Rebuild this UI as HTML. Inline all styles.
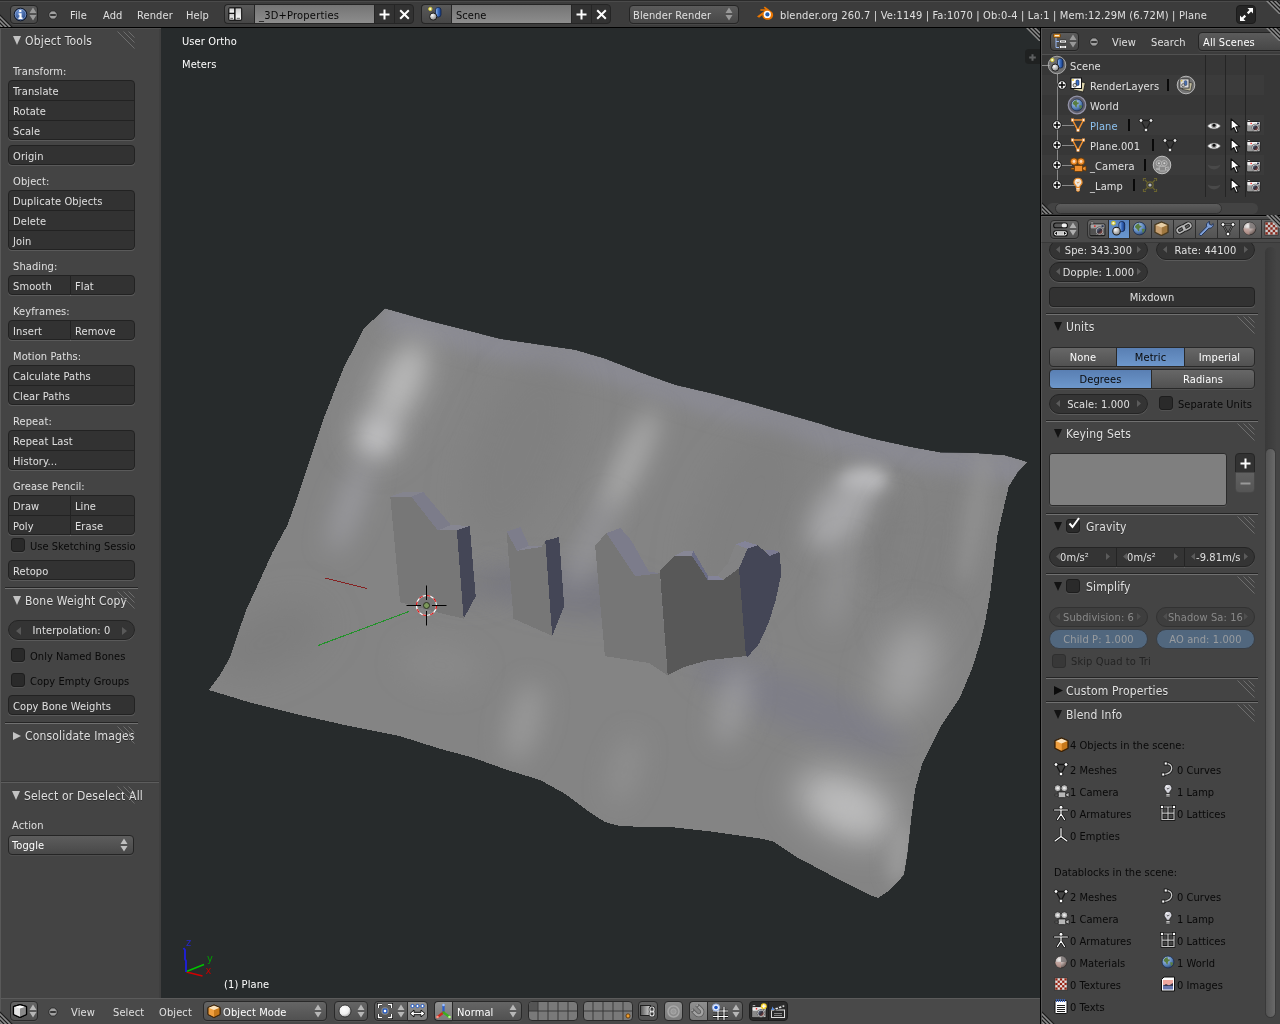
<!DOCTYPE html>
<html><head><meta charset="utf-8"><title>Blender</title>
<style>
*{box-sizing:border-box;margin:0;padding:0}
html,body{width:1280px;height:1024px;overflow:hidden;background:#272b2c}
body{font-family:"DejaVu Sans Condensed","DejaVu Sans","Liberation Sans",sans-serif;font-stretch:condensed;font-size:11px;letter-spacing:.11px;color:#e0e0e0;position:relative}
#root{position:absolute;left:0;top:0;width:1280px;height:1024px;overflow:hidden;will-change:transform;opacity:.999}
.a{position:absolute}
.t{position:absolute;white-space:nowrap;height:20px;line-height:20px}
.h{margin-top:-1px;font-size:12px;letter-spacing:.18px;text-shadow:0 1px 0 rgba(0,0,0,.35)}
.k{color:#0a0a0a;letter-spacing:.04px}
.btn{position:absolute;background:#333;border:1px solid #232323;box-shadow:0 1px 0 rgba(255,255,255,.12)}
.num{position:absolute;background:#353535;border:1px solid #252525;border-radius:10px;box-shadow:0 1px 0 rgba(255,255,255,.12);text-align:center;line-height:18px;height:20px}
.sep{position:absolute;height:1px;background:#727272;box-shadow:0 -1px 0 #262626}
.cb{position:absolute;width:14px;height:14px;border-radius:3px;background:#2b2b2b;border:1px solid #1e1e1e;box-shadow:0 1px 0 rgba(255,255,255,.08)}
.hb{position:absolute;border:1px solid #262626;border-radius:4px;background:linear-gradient(#5c5c5c,#484848);box-shadow:0 1px 0 rgba(255,255,255,.06)}
</style></head>
<body>
<div id="root">
<div class="a" style="left:0px;top:0px;width:1280px;height:28px;background:#3d3d3d;border-top:1px solid #2c2c2c;border-bottom:1px solid #000;box-shadow:inset 0 1px 0 #4c4c4c"></div>
<svg class="a" style="left:0;top:14px" width="14" height="13" viewBox="0 0 14 13"><g fill="none" stroke-width="1.500"><path d="M-1 0.300l14 14M-1 4.300l10 10M-1 8.300l6 6" stroke="#1c1c1c"/><path d="M-1 2l12 12M-1 6l8 8M-1 10l4 4" stroke="#8c8c8c"/></g></svg>
<div class="hb" style="left:10px;top:5px;width:28px;height:19px"></div>
<svg class="a" style="left:12.5px;top:6.5px" width="15" height="15" viewBox="0 0 15 15"><defs><radialGradient id="ig" cx=".4" cy=".3" r=".8"><stop offset="0" stop-color="#6f95d6"/><stop offset="1" stop-color="#1d3c78"/></radialGradient></defs><circle cx="7.5" cy="7.5" r="6.3" fill="url(#ig)" stroke="#0c1424" stroke-width="1"/><circle cx="7.5" cy="7.5" r="5.3" fill="none" stroke="#b9cdf0" stroke-opacity=".55" stroke-width=".8"/><path d="M6.2 3h2.2v2H6.2zM5.6 6.2h3v4.3h1v1.5H5.4v-1.5h1V7.7h-.8z" fill="#fff"/></svg>
<svg class="a" style="left:29px;top:7px" width="8" height="14" viewBox="0 0 8 14"><path d="M4 0.5l3.5 5.5h-7zM4 13.5l3.5-5.5h-7z" fill="#9a9a9a"/></svg>
<svg class="a" style="left:46.5px;top:8.5px" width="12" height="12" viewBox="0 0 12 12"><circle cx="6" cy="6" r="4.2" fill="#a2a2a2" stroke="#2a2a2a" stroke-width="1"/><path d="M3.200 6h5.600" stroke="#242424" stroke-width="1.700"/></svg>
<div class="t " style="left:70px;top:6px;">File</div>
<div class="t " style="left:103px;top:6px;">Add</div>
<div class="t " style="left:137px;top:6px;">Render</div>
<div class="t " style="left:186px;top:6px;">Help</div>
<div class="a" style="left:224px;top:4px;width:30px;height:20px;border:1px solid #262626;border-right:none;border-radius:4px 0 0 4px;background:linear-gradient(#5a5a5a,#474747)"></div>
<svg class="a" style="left:228px;top:7px" width="14.500" height="14" viewBox="0 0 14.500 14"><defs><linearGradient id="scg" x1="0" y1="0" x2="0" y2="1"><stop offset="0" stop-color="#c8c8c8"/><stop offset="1" stop-color="#fff"/></linearGradient></defs><rect x=".300" y=".300" width="13.900" height="13.400" rx="1.600" fill="#111"/><rect x="1.400" y="1.400" width="4.700" height="4.300" fill="url(#scg)"/><rect x="1.400" y="7" width="4.700" height="5.600" fill="url(#scg)"/><rect x="7.600" y="1.400" width="5.500" height="11.200" fill="url(#scg)"/><path d="M2.300 11.300h2.800M8.700 11.300h3.200" stroke="#555" stroke-width="1"/></svg>
<div class="a" style="left:254px;top:4px;width:121px;height:20px;border:1px solid #262626;background:linear-gradient(#757575,#8e8e8e)"></div>
<div class="t k" style="left:259px;top:6px;letter-spacing:.22px">_3D+Properties</div>
<div class="a" style="left:374px;top:4px;width:21px;height:20px;border:1px solid #262626;background:#333"></div>
<div class="a" style="left:394px;top:4px;width:20px;height:20px;border:1px solid #262626;border-radius:0 4px 4px 0;background:#333"></div>
<svg class="a" style="left:379px;top:9px" width="11" height="11" viewBox="0 0 11 11"><path d="M5.500 .500v10M.500 5.500h10" stroke="#fff" stroke-width="2"/></svg>
<svg class="a" style="left:399px;top:9px" width="11" height="11" viewBox="0 0 11 11"><path d="M1.200 1.200l8.600 8.600M9.800 1.200l-8.600 8.600" stroke="#fff" stroke-width="2"/></svg>
<div class="a" style="left:421px;top:4px;width:30px;height:20px;border:1px solid #262626;border-right:none;border-radius:4px 0 0 4px;background:linear-gradient(#5a5a5a,#474747)"></div>
<svg class="a" style="left:427px;top:6px" width="16" height="16" viewBox="0 0 16 16"><defs><radialGradient id="sba" cx=".35" cy=".3" r=".7"><stop offset="0" stop-color="#fff"/><stop offset="1" stop-color="#8a8a8a"/></radialGradient><linearGradient id="sca" x1="0" x2="1"><stop offset="0" stop-color="#9cc0f0"/><stop offset=".5" stop-color="#3a6cc0"/><stop offset="1" stop-color="#163a80"/></linearGradient></defs><rect x="8.5" y="1.5" width="5.5" height="9.5" rx="2.4" fill="url(#sca)" stroke="#12234a" stroke-width=".8"/><circle cx="3.3" cy="3" r="1.7" fill="#fffbd0" stroke="#c8c030" stroke-width="1"/><circle cx="6.2" cy="10.6" r="3.6" fill="url(#sba)" stroke="#1a1a1a" stroke-width="1"/></svg>
<div class="a" style="left:451px;top:4px;width:121px;height:20px;border:1px solid #262626;background:linear-gradient(#757575,#8e8e8e)"></div>
<div class="t k" style="left:456px;top:6px;">Scene</div>
<div class="a" style="left:571px;top:4px;width:21px;height:20px;border:1px solid #262626;background:#333"></div>
<div class="a" style="left:591px;top:4px;width:20px;height:20px;border:1px solid #262626;border-radius:0 4px 4px 0;background:#333"></div>
<svg class="a" style="left:576px;top:9px" width="11" height="11" viewBox="0 0 11 11"><path d="M5.500 .500v10M.500 5.500h10" stroke="#fff" stroke-width="2"/></svg>
<svg class="a" style="left:596px;top:9px" width="11" height="11" viewBox="0 0 11 11"><path d="M1.200 1.200l8.600 8.600M9.800 1.200l-8.600 8.600" stroke="#fff" stroke-width="2"/></svg>
<div class="hb" style="left:629px;top:5px;width:110px;height:19px"></div>
<div class="t " style="left:633px;top:6px;">Blender Render</div>
<svg class="a" style="left:725px;top:7px" width="8" height="14" viewBox="0 0 8 14"><path d="M4 0.5l3.5 5.5h-7zM4 13.5l3.5-5.5h-7z" fill="#9a9a9a"/></svg>
<svg class="a" style="left:756px;top:6px" width="18" height="16" viewBox="0 0 18 16"><path d="M1 10.5L8.5 4.8H4.4V3.2h5.2l-1.9-1.5 1.1-1.2 7.2 5.6c1.6 1.5 1.6 4.6-.4 6.3-2 1.800-5.600 1.900-7.800 0-1.100-.9-1.500-2.200-1.400-3.300l-3.300 2.600z" fill="#ea7600"/><circle cx="11.300" cy="8.400" r="3.600" fill="#fff"/><circle cx="11.400" cy="8.400" r="2.100" fill="#235fb0"/></svg>
<div class="t " style="left:780px;top:6px;letter-spacing:.17px">blender.org 260.7 | Ve:1149 | Fa:1070 | Ob:0-4 | La:1 | Mem:12.29M (6.72M) | Plane</div>
<div class="a" style="left:1236px;top:5px;width:20px;height:19px;border-radius:4px;background:#262626;border:1px solid #1c1c1c"></div>
<svg class="a" style="left:1239px;top:7px" width="15" height="15" viewBox="0 0 15 15"><g fill="#fff"><path d="M8.500 1h5.500v5.500l-1.900-1.900-2.600 2.600-1.600-1.600 2.600-2.600z"/><path d="M6.500 14H1V8.500l1.900 1.900 2.600-2.600 1.600 1.600-2.600 2.600z"/></g></svg>
<svg class="a" style="left:1266px;top:1px" width="14" height="13" viewBox="0 0 14 13"><g fill="none" stroke-width="1.500"><path d="M1.700 -1l14 14M5.700 -1l10 10M9.700 -1l6 6" stroke="#1c1c1c"/><path d="M0 -1l14 14M4 -1l10 10M8 -1l6 6" stroke="#8c8c8c"/></g></svg>
<div class="a" style="left:0px;top:28px;width:161px;height:970px;background:#454545;border-left:1px solid #5a5a5a;border-top:1px solid #525252"></div>
<div class="a" style="left:159px;top:29px;width:2px;height:969px;background:#404040"></div>
<svg class="a" style="left:13px;top:36px" width="8" height="9" viewBox="0 0 8 9"><path d="M0 0h8l-4.0 9z" fill="#c4c4c4"/></svg>
<div class="t h" style="left:25px;top:32px;">Object Tools</div>
<svg class="a" style="left:117px;top:31px" width="18" height="18" viewBox="0 0 18 18"><g stroke="#6e6e6e" stroke-width="1" fill="none"><path d="M0.5 0.5l17 17M6.5 0.5l11 11M11.5 0.5l6 6"/></g></svg>
<div class="t " style="left:13px;top:62px;">Transform:</div>
<div class="btn" style="left:8px;top:80px;width:127px;height:21px;border-radius:4px 4px 0 0"></div>
<div class="t " style="left:13px;top:82px;">Translate</div>
<div class="btn" style="left:8px;top:100px;width:127px;height:21px;border-radius:0"></div>
<div class="t " style="left:13px;top:102px;">Rotate</div>
<div class="btn" style="left:8px;top:120px;width:127px;height:20px;border-radius:0 0 4px 4px"></div>
<div class="t " style="left:13px;top:122px;">Scale</div>
<div class="btn" style="left:8px;top:145px;width:127px;height:20px;border-radius:4px"></div>
<div class="t " style="left:13px;top:147px;">Origin</div>
<div class="t " style="left:13px;top:172px;">Object:</div>
<div class="btn" style="left:8px;top:190px;width:127px;height:21px;border-radius:4px 4px 0 0"></div>
<div class="t " style="left:13px;top:192px;">Duplicate Objects</div>
<div class="btn" style="left:8px;top:210px;width:127px;height:21px;border-radius:0"></div>
<div class="t " style="left:13px;top:212px;">Delete</div>
<div class="btn" style="left:8px;top:230px;width:127px;height:20px;border-radius:0 0 4px 4px"></div>
<div class="t " style="left:13px;top:232px;">Join</div>
<div class="t " style="left:13px;top:257px;">Shading:</div>
<div class="btn" style="left:8px;top:275px;width:63px;height:20px;border-radius:4px 0 0 4px"></div>
<div class="btn" style="left:70px;top:275px;width:65px;height:20px;border-radius:0 4px 4px 0"></div>
<div class="t " style="left:13px;top:277px;">Smooth</div>
<div class="t " style="left:75px;top:277px;">Flat</div>
<div class="t " style="left:13px;top:302px;">Keyframes:</div>
<div class="btn" style="left:8px;top:320px;width:63px;height:20px;border-radius:4px 0 0 4px"></div>
<div class="btn" style="left:70px;top:320px;width:65px;height:20px;border-radius:0 4px 4px 0"></div>
<div class="t " style="left:13px;top:322px;">Insert</div>
<div class="t " style="left:75px;top:322px;">Remove</div>
<div class="t " style="left:13px;top:347px;">Motion Paths:</div>
<div class="btn" style="left:8px;top:365px;width:127px;height:21px;border-radius:4px 4px 0 0"></div>
<div class="t " style="left:13px;top:367px;">Calculate Paths</div>
<div class="btn" style="left:8px;top:385px;width:127px;height:20px;border-radius:0 0 4px 4px"></div>
<div class="t " style="left:13px;top:387px;">Clear Paths</div>
<div class="t " style="left:13px;top:412px;">Repeat:</div>
<div class="btn" style="left:8px;top:430px;width:127px;height:21px;border-radius:4px 4px 0 0"></div>
<div class="t " style="left:13px;top:432px;">Repeat Last</div>
<div class="btn" style="left:8px;top:450px;width:127px;height:20px;border-radius:0 0 4px 4px"></div>
<div class="t " style="left:13px;top:452px;">History...</div>
<div class="t " style="left:13px;top:477px;">Grease Pencil:</div>
<div class="btn" style="left:8px;top:495px;width:63px;height:21px;border-radius:4px 0 0 0"></div>
<div class="btn" style="left:70px;top:495px;width:65px;height:21px;border-radius:0 4px 0 0"></div>
<div class="t " style="left:13px;top:497px;">Draw</div>
<div class="t " style="left:75px;top:497px;">Line</div>
<div class="btn" style="left:8px;top:515px;width:63px;height:20px;border-radius:0 0 0 4px"></div>
<div class="btn" style="left:70px;top:515px;width:65px;height:20px;border-radius:0 0 4px 0"></div>
<div class="t " style="left:13px;top:517px;">Poly</div>
<div class="t " style="left:75px;top:517px;">Erase</div>
<div class="cb" style="left:11px;top:538px"></div>
<div class="t k" style="left:30px;top:537px;width:105px;overflow:hidden">Use Sketching Session</div>
<div class="btn" style="left:8px;top:560px;width:127px;height:20px;border-radius:4px"></div>
<div class="t " style="left:13px;top:562px;">Retopo</div>
<div class="sep" style="left:5px;top:588px;width:133px"></div>
<svg class="a" style="left:13px;top:596px" width="8" height="9" viewBox="0 0 8 9"><path d="M0 0h8l-4.0 9z" fill="#c4c4c4"/></svg>
<div class="t h" style="left:25px;top:592px;">Bone Weight Copy</div>
<svg class="a" style="left:117px;top:591px" width="18" height="18" viewBox="0 0 18 18"><g stroke="#6e6e6e" stroke-width="1" fill="none"><path d="M0.5 0.5l17 17M6.5 0.5l11 11M11.5 0.5l6 6"/></g></svg>
<div class="num" style="left:8px;top:620px;width:127px;line-height:20px">Interpolation: 0</div>
<svg class="a" style="left:16px;top:627px" width="5" height="8" viewBox="0 0 5 8"><path d="M5 0v8L0 4z" fill="#5a5a5a"/></svg>
<svg class="a" style="left:122px;top:627px" width="5" height="8" viewBox="0 0 5 8"><path d="M0 0v8l5-4z" fill="#5a5a5a"/></svg>
<div class="cb" style="left:11px;top:648px"></div>
<div class="t k" style="left:30px;top:647px;">Only Named Bones</div>
<div class="cb" style="left:11px;top:673px"></div>
<div class="t k" style="left:30px;top:672px;">Copy Empty Groups</div>
<div class="btn" style="left:8px;top:695px;width:127px;height:20px;border-radius:4px"></div>
<div class="t " style="left:13px;top:697px;">Copy Bone Weights</div>
<div class="sep" style="left:5px;top:723px;width:133px"></div>
<svg class="a" style="left:13px;top:731.5px" width="8" height="8" viewBox="0 0 8 8"><path d="M0 0v8l8 -4.0z" fill="#c4c4c4"/></svg>
<div class="t h" style="left:25px;top:727px;">Consolidate Images</div>
<svg class="a" style="left:117px;top:726px" width="18" height="18" viewBox="0 0 18 18"><g stroke="#6e6e6e" stroke-width="1" fill="none"><path d="M0.5 0.5l17 17M6.5 0.5l11 11M11.5 0.5l6 6"/></g></svg>
<div class="a" style="left:1px;top:782px;width:158px;height:1px;background:#5e5e5e;box-shadow:0 -1px 0 #3a3a3a"></div>
<svg class="a" style="left:12px;top:791px" width="8" height="9" viewBox="0 0 8 9"><path d="M0 0h8l-4.0 9z" fill="#c4c4c4"/></svg>
<div class="t h" style="left:24px;top:787px;">Select or Deselect All</div>
<svg class="a" style="left:117px;top:786px" width="18" height="18" viewBox="0 0 18 18"><g stroke="#6e6e6e" stroke-width="1" fill="none"><path d="M0.5 0.5l17 17M6.5 0.5l11 11M11.5 0.5l6 6"/></g></svg>
<div class="t " style="left:12px;top:816px;">Action</div>
<div class="hb" style="left:8px;top:835px;width:126px;height:20px;background:linear-gradient(#5e5e5e,#494949)"></div>
<div class="t " style="left:12px;top:836px;color:#fff">Toggle</div>
<svg class="a" style="left:120px;top:838px" width="8" height="14" viewBox="0 0 8 14"><path d="M4 0.5l3.5 5.5h-7zM4 13.5l3.5-5.5h-7z" fill="#c0c0c0"/></svg>
<svg class="a" style="left:161px;top:28px" width="879" height="970" viewBox="161 28 879 970" shape-rendering="crispEdges">
<defs>
<filter id="b8" filterUnits="userSpaceOnUse" x="161" y="28" width="879" height="970"><feGaussianBlur stdDeviation="8"/></filter>
<filter id="b12" filterUnits="userSpaceOnUse" x="161" y="28" width="879" height="970"><feGaussianBlur stdDeviation="12"/></filter>
<filter id="b18" filterUnits="userSpaceOnUse" x="161" y="28" width="879" height="970"><feGaussianBlur stdDeviation="18"/></filter>
<clipPath id="mc"><polygon points="385.0,308.5 425.0,320.0 465.0,330.0 500.0,339.0 537.5,344.5 575.0,350.0 605.0,358.8 640.0,372.5 675.0,385.0 712.5,393.8 750.0,403.8 787.5,414.5 820.0,423.8 835.0,428.8 872.5,438.8 910.0,447.0 940.0,452.5 972.5,453.0 1005.0,455.5 1027.0,462.0 1017.5,472.5 1008.8,486.2 1003.8,507.5 997.5,535.0 993.8,565.0 990.0,595.0 985.0,622.5 980.0,643.0 972.5,667.5 960.0,697.5 940.0,727.5 922.5,762.5 915.0,790.0 911.0,820.0 907.5,852.5 903.8,875.0 890.0,890.0 878.0,898.0 870.0,895.0 835.0,877.5 797.5,857.5 772.5,841.2 760.0,838.5 715.0,832.0 675.0,827.5 620.0,826.2 605.0,822.0 590.0,812.5 565.0,793.8 540.0,780.0 507.5,770.0 472.5,757.5 440.0,748.8 400.0,736.2 350.0,726.2 300.0,715.0 250.0,702.5 208.8,690.0 220.0,675.0 230.0,657.5 237.5,635.0 246.2,610.0 260.0,580.0 272.5,552.5 287.5,525.0 297.5,497.5 310.0,460.0 325.0,415.0 343.8,367.5 363.8,328.8"/></clipPath>
</defs>
<polygon points="385.0,308.5 425.0,320.0 465.0,330.0 500.0,339.0 537.5,344.5 575.0,350.0 605.0,358.8 640.0,372.5 675.0,385.0 712.5,393.8 750.0,403.8 787.5,414.5 820.0,423.8 835.0,428.8 872.5,438.8 910.0,447.0 940.0,452.5 972.5,453.0 1005.0,455.5 1027.0,462.0 1017.5,472.5 1008.8,486.2 1003.8,507.5 997.5,535.0 993.8,565.0 990.0,595.0 985.0,622.5 980.0,643.0 972.5,667.5 960.0,697.5 940.0,727.5 922.5,762.5 915.0,790.0 911.0,820.0 907.5,852.5 903.8,875.0 890.0,890.0 878.0,898.0 870.0,895.0 835.0,877.5 797.5,857.5 772.5,841.2 760.0,838.5 715.0,832.0 675.0,827.5 620.0,826.2 605.0,822.0 590.0,812.5 565.0,793.8 540.0,780.0 507.5,770.0 472.5,757.5 440.0,748.8 400.0,736.2 350.0,726.2 300.0,715.0 250.0,702.5 208.8,690.0 220.0,675.0 230.0,657.5 237.5,635.0 246.2,610.0 260.0,580.0 272.5,552.5 287.5,525.0 297.5,497.5 310.0,460.0 325.0,415.0 343.8,367.5 363.8,328.8" fill="#858585"/>
<g clip-path="url(#mc)">
<polyline points="385,314 500,345 605,365 712,400 835,435 940,459 1027,468" stroke="#8e8e98" stroke-width="30" fill="none" stroke-opacity=".75" filter="url(#b8)"/>
<ellipse cx="575" cy="592" rx="95" ry="24" transform="rotate(8 575 592)" fill="#74747f" fill-opacity="0.65" filter="url(#b12)"/>
<ellipse cx="470" cy="585" rx="40" ry="18" transform="rotate(0 470 585)" fill="#777780" fill-opacity="0.5" filter="url(#b12)"/>
<ellipse cx="800" cy="705" rx="115" ry="24" transform="rotate(22 800 705)" fill="#7c7c8a" fill-opacity="0.75" filter="url(#b12)"/>
<ellipse cx="700" cy="630" rx="60" ry="22" transform="rotate(20 700 630)" fill="#7a7a84" fill-opacity="0.5" filter="url(#b12)"/>
<ellipse cx="270" cy="640" rx="60" ry="30" transform="rotate(-25 270 640)" fill="#7a7a7a" fill-opacity="0.6" filter="url(#b18)"/>
<ellipse cx="520" cy="450" rx="45" ry="100" transform="rotate(22 520 450)" fill="#7d7d7d" fill-opacity="0.55" filter="url(#b18)"/>
<ellipse cx="745" cy="520" rx="45" ry="100" transform="rotate(22 745 520)" fill="#7e7e7e" fill-opacity="0.5" filter="url(#b18)"/>
<ellipse cx="930" cy="560" rx="30" ry="90" transform="rotate(15 930 560)" fill="#7e7e7e" fill-opacity="0.45" filter="url(#b18)"/>
<ellipse cx="398" cy="388" rx="30" ry="72" transform="rotate(25 398 388)" fill="#9a9a9a" fill-opacity="0.55" filter="url(#b18)"/>
<ellipse cx="401" cy="384" rx="18" ry="42" transform="rotate(25 401 384)" fill="#bcbcbc" fill-opacity="0.95" filter="url(#b12)"/>
<ellipse cx="377" cy="436" rx="20" ry="24" transform="rotate(25 377 436)" fill="#c4c4c6" fill-opacity="0.95" filter="url(#b12)"/>
<ellipse cx="350" cy="505" rx="12" ry="50" transform="rotate(20 350 505)" fill="#a0a0a6" fill-opacity="0.8" filter="url(#b12)"/>
<ellipse cx="630" cy="462" rx="13" ry="58" transform="rotate(26 630 462)" fill="#b0b0b0" fill-opacity="0.9" filter="url(#b12)"/>
<ellipse cx="590" cy="545" rx="12" ry="50" transform="rotate(24 590 545)" fill="#9c9ca2" fill-opacity="0.7" filter="url(#b12)"/>
<ellipse cx="864" cy="481" rx="24" ry="12" transform="rotate(-5 864 481)" fill="#cacacc" fill-opacity="0.95" filter="url(#b8)"/>
<ellipse cx="842" cy="512" rx="24" ry="46" transform="rotate(38 842 512)" fill="#aeaeb0" fill-opacity="0.85" filter="url(#b12)"/>
<ellipse cx="885" cy="540" rx="12" ry="50" transform="rotate(12 885 540)" fill="#7c7c7c" fill-opacity="0.6" filter="url(#b12)"/>
<ellipse cx="838" cy="585" rx="14" ry="45" transform="rotate(12 838 585)" fill="#9a9a9c" fill-opacity="0.55" filter="url(#b12)"/>
<ellipse cx="908" cy="668" rx="26" ry="50" transform="rotate(18 908 668)" fill="#acacae" fill-opacity="0.8" filter="url(#b18)"/>
<ellipse cx="846" cy="806" rx="52" ry="28" transform="rotate(25 846 806)" fill="#c6c6c8" fill-opacity="0.9" filter="url(#b18)"/>
<ellipse cx="850" cy="812" rx="26" ry="12" transform="rotate(25 850 812)" fill="#bdbdbd" fill-opacity="0.6" filter="url(#b12)"/>
<ellipse cx="975" cy="515" rx="12" ry="70" transform="rotate(10 975 515)" fill="#949494" fill-opacity="0.7" filter="url(#b8)"/>
<ellipse cx="524" cy="722" rx="16" ry="40" transform="rotate(15 524 722)" fill="#a0a0a0" fill-opacity="0.75" filter="url(#b12)"/>
<ellipse cx="625" cy="770" rx="14" ry="36" transform="rotate(15 625 770)" fill="#969696" fill-opacity="0.6" filter="url(#b12)"/>
<ellipse cx="732" cy="706" rx="16" ry="40" transform="rotate(15 732 706)" fill="#a0a0a2" fill-opacity="0.75" filter="url(#b12)"/>
<ellipse cx="900" cy="855" rx="12" ry="30" transform="rotate(10 900 855)" fill="#a4a4a4" fill-opacity="0.7" filter="url(#b8)"/>
<ellipse cx="440" cy="665" rx="40" ry="22" transform="rotate(10 440 665)" fill="#8c8c8c" fill-opacity="0.7" filter="url(#b12)"/>
</g>
<path d="M325 578L367 588.500" stroke="#862222" stroke-width="1" shape-rendering="crispEdges"/>
<path d="M318 645.500L409 611.500" stroke="#23932b" stroke-width="1.100" shape-rendering="crispEdges"/>
<polygon points="390.3,496.6 411.3,496.6 437.9,530.5 456.8,530.2 463.7,618.7 438.8,612.7 400.1,602.3" fill="#787878"/>
<polygon points="390.3,496.6 403.5,492.0 423.3,492.0 411.3,496.6" fill="#85858f"/>
<polygon points="411.3,496.6 423.3,492.0 450.8,525.0 437.9,530.5" fill="#7d7d8b"/>
<polygon points="437.9,530.5 450.8,525.0 469.7,525.9 456.8,530.2" fill="#878792"/>
<polygon points="456.8,530.2 469.7,525.9 475.7,596.3 463.7,618.7" fill="#454757"/>
<polygon points="506.6,531.5 517.0,550.8 541.9,546.5 545.3,540.8 552.2,635.9 513.5,618.7" fill="#787878"/>
<polygon points="506.6,531.5 520.4,527.1 529.0,545.6 517.0,550.8" fill="#7e7e8c"/>
<polygon points="517.0,550.8 529.0,545.6 541.9,545.6 541.9,546.8" fill="#868692"/>
<polygon points="545.3,540.8 559.1,537.0 564.2,605.8 552.2,635.9" fill="#454757"/>
<polygon points="717.5,575.7 727.8,563.3 735.6,544.4 747.6,548.7 739.0,568.4 723.5,579.6" fill="#8a8a8c" fill-opacity=".35"/>
<polygon points="595.1,545.2 606.6,533.2 635.0,576.2 659.9,573.3 667.7,675.3 648.8,663.0 604.9,656.1" fill="#777777"/>
<polygon points="606.6,533.2 620.4,528.0 631.6,540.9 648.8,571.5 659.9,573.3 635.0,576.2" fill="#7d7d8c"/>
<polygon points="659.9,571.0 673.7,556.4 691.7,555.5 708.1,580.5 723.5,579.6 739.0,568.4 745.9,656.1 707.2,660.4 683.1,667.3 667.7,675.3" fill="#595959"/>
<polygon points="673.7,556.4 683.1,551.3 693.4,550.9 691.7,555.5" fill="#888896"/>
<polygon points="691.7,555.5 693.4,550.9 708.1,576.2 708.1,580.5" fill="#6c6e86"/>
<polygon points="708.1,580.5 708.1,576.2 717.5,575.7 723.5,579.6" fill="#85859a"/>
<polygon points="739.0,568.4 747.6,548.7 757.9,545.2 769.1,555.5 779.4,552.1 781.4,573.6 775.9,599.4 769.1,621.7 758.8,644.1 747.6,657.0 745.9,656.1" fill="#454757"/>
<polygon points="735.6,544.4 745.0,541.3 757.9,545.2 747.6,548.7" fill="#85859a"/>
<polygon points="764.8,549.5 773.4,549.9 779.4,552.1 769.1,556.1" fill="#7c7c92"/>
<g shape-rendering="auto"><circle cx="426.5" cy="605.5" r="3" fill="#7d9a5c" stroke="#2a3320" stroke-width="1"/><circle cx="426.5" cy="605.5" r="10" fill="none" stroke="#fff" stroke-width="1.2"/><circle cx="426.5" cy="605.5" r="10" fill="none" stroke="#e01010" stroke-width="1.2" stroke-dasharray="3.9 3.9"/><path d="M406.5 605.5h14.500M432.0 605.5h14.500M426.5 585.5v14.500M426.5 611.0v14.500" stroke="#000" stroke-width="1"/></g>
<g shape-rendering="auto" fill="none" stroke-width="1.700"><path d="M186.500 972L202.500 976" stroke="#d40000"/><path d="M186.500 971.500L204 964.500" stroke="#00c400"/><path d="M186 972v-11l-1-2v-9l-1.500-2" stroke="#2020d8" stroke-width="1.900"/></g>
</svg>
<div class="t " style="left:182px;top:32px;color:#fff">User Ortho</div>
<div class="t " style="left:182px;top:55px;color:#fff">Meters</div>
<div class="t " style="left:224px;top:975px;color:#fff">(1) Plane</div>
<div class="t " style="left:205.5px;top:961px;color:#c00000">x</div>
<div class="t " style="left:207px;top:949px;color:#00a000">y</div>
<div class="t " style="left:186px;top:933px;color:#2828c8">z</div>
<svg class="a" style="left:1026px;top:28px" width="14" height="13" viewBox="0 0 14 13"><g fill="none" stroke-width="1.500"><path d="M1.700 -1l14 14M5.700 -1l10 10M9.700 -1l6 6" stroke="#1c1c1c"/><path d="M0 -1l14 14M4 -1l10 10M8 -1l6 6" stroke="#8c8c8c"/></g></svg>
<div class="a" style="left:1025px;top:49px;width:15px;height:15px;background:#202222;border-radius:4px 0 0 4px"></div>
<svg class="a" style="left:1028.500px;top:53.700px" width="7" height="7" viewBox="0 0 7 7"><path d="M3.500 0.200v6.600M0.200 3.500h6.600" stroke="#5f6162" stroke-width="2"/></svg>
<div class="a" style="left:0px;top:998px;width:1041px;height:26px;background:#4a4a4a;border-top:1px solid #5c5c5c;border-left:1px solid #5a5a5a"></div>
<svg class="a" style="left:0;top:1011px" width="14" height="13" viewBox="0 0 14 13"><g fill="none" stroke-width="1.500"><path d="M-1 0.300l14 14M-1 4.300l10 10M-1 8.300l6 6" stroke="#1c1c1c"/><path d="M-1 2l12 12M-1 6l8 8M-1 10l4 4" stroke="#8c8c8c"/></g></svg>
<div class="a" style="left:10px;top:1001px;width:28px;height:20px;border-radius:4px;border:1px solid #2a2a2a;background:linear-gradient(#666,#525252);box-shadow:0 1px 0 rgba(255,255,255,.06)"></div>
<svg class="a" style="left:12px;top:1003px" width="16" height="16" viewBox="0 0 16 16"><path d="M1.500 3.500L8 1.500l6.500 2v8L8 14.500l-6.500-3z" fill="#fff" stroke="#000" stroke-width="1.200" stroke-linejoin="round"/><path d="M8 5.500l6.500-2v8L8 14.500z" fill="#8a8a8a"/><path d="M1.500 3.500L8 5.500v9l-6.500-3z" fill="#e4e4e4"/><path d="M1.500 3.500L8 1.500l6.500 2v8L8 14.500l-6.500-3z" fill="none" stroke="#000" stroke-width="1.200" stroke-linejoin="round"/></svg>
<svg class="a" style="left:29px;top:1004px" width="8" height="14" viewBox="0 0 8 14"><path d="M4 0.5l3.5 5.5h-7zM4 13.5l3.5-5.5h-7z" fill="#b8b8b8"/></svg>
<svg class="a" style="left:46.5px;top:1005.5px" width="12" height="12" viewBox="0 0 12 12"><circle cx="6" cy="6" r="4.2" fill="#a2a2a2" stroke="#2a2a2a" stroke-width="1"/><path d="M3.200 6h5.600" stroke="#242424" stroke-width="1.700"/></svg>
<div class="t " style="left:71px;top:1003px;">View</div>
<div class="t " style="left:113px;top:1003px;">Select</div>
<div class="t " style="left:159px;top:1003px;">Object</div>
<div class="a" style="left:203px;top:1001px;width:124px;height:20px;border-radius:4px;border:1px solid #2a2a2a;background:linear-gradient(#666,#525252);box-shadow:0 1px 0 rgba(255,255,255,.06)"></div>
<svg class="a" style="left:207px;top:1004px" width="14" height="14" viewBox="0 0 14 14"><path d="M1 3.500L7 1l6 2.500v7L7 13.500 1 10.500z" fill="#f0a040" stroke="#3a2208" stroke-width="1" stroke-linejoin="round"/><path d="M7 6l6-2.500v7L7 13.500z" fill="#c87a1c"/><path d="M1 3.500L7 6v7.500L1 10.500z" fill="#f0a040"/><path d="M1 3.500L7 1l6 2.500L7 6z" fill="#fbe3bd"/><path d="M1 3.500L7 1l6 2.500v7L7 13.500 1 10.500z" fill="none" stroke="#3a2208" stroke-width="1" stroke-linejoin="round"/></svg>
<div class="t " style="left:223px;top:1003px;color:#fff">Object Mode</div>
<svg class="a" style="left:314px;top:1004px" width="8" height="14" viewBox="0 0 8 14"><path d="M4 0.5l3.5 5.5h-7zM4 13.5l3.5-5.5h-7z" fill="#b8b8b8"/></svg>
<div class="a" style="left:334px;top:1001px;width:34px;height:20px;border-radius:4px;border:1px solid #2a2a2a;background:linear-gradient(#666,#525252);box-shadow:0 1px 0 rgba(255,255,255,.06)"></div>
<svg class="a" style="left:338px;top:1004px" width="14" height="14" viewBox="0 0 14 14"><defs><radialGradient id="sh" cx=".4" cy=".35" r=".7"><stop offset="0" stop-color="#fff"/><stop offset=".6" stop-color="#f0f0f0"/><stop offset="1" stop-color="#9a9a9a"/></radialGradient></defs><circle cx="7" cy="7" r="6" fill="url(#sh)" stroke="#222" stroke-width=".8"/></svg>
<svg class="a" style="left:357px;top:1004px" width="8" height="14" viewBox="0 0 8 14"><path d="M4 0.5l3.5 5.5h-7zM4 13.5l3.5-5.5h-7z" fill="#b8b8b8"/></svg>
<div class="a" style="left:374px;top:1001px;width:34px;height:20px;border-radius:4px 0 0 4px;border:1px solid #2a2a2a;background:linear-gradient(#666,#525252);box-shadow:0 1px 0 rgba(255,255,255,.06)"></div>
<svg class="a" style="left:377px;top:1003px" width="16" height="16" viewBox="0 0 16 16"><g fill="none" stroke="#111" stroke-width="3"><path d="M1.500 5V1.500H5M11 1.500h3.500V5M14.500 11v3.500H11M5 14.500H1.500V11"/></g><g fill="none" stroke="#fff" stroke-width="1.400"><path d="M1.500 5V1.500H5M11 1.500h3.500V5M14.500 11v3.500H11M5 14.500H1.500V11"/></g><circle cx="8" cy="8" r="3.800" fill="#8c8c8c"/><rect x="6.200" y="6.200" width="3.600" height="3.600" rx=".800" fill="#fff" stroke="#1c57c8" stroke-width="1.200"/></svg>
<svg class="a" style="left:397px;top:1004px" width="8" height="14" viewBox="0 0 8 14"><path d="M4 0.5l3.5 5.5h-7zM4 13.5l3.5-5.5h-7z" fill="#b8b8b8"/></svg>
<div class="a" style="left:407px;top:1001px;width:21px;height:20px;border-radius:0 4px 4px 0;border:1px solid #2a2a2a;background:linear-gradient(#929292,#7c7c7c)"></div>
<svg class="a" style="left:409px;top:1003px" width="17" height="16" viewBox="0 0 17 16"><g fill="#fff" stroke="#1c57c8" stroke-width="1"><circle cx="3.500" cy="3" r="1.600"/><circle cx="8.500" cy="3" r="1.600"/><circle cx="13.500" cy="3" r="1.600"/></g><path d="M1 10.500l4-3.500v2.300h7V7l4 3.500-4 3.500v-2.300H5V14z" fill="#fff" stroke="#111" stroke-width="1"/></svg>
<div class="a" style="left:434px;top:1001px;width:19px;height:20px;border-radius:4px 0 0 4px;border:1px solid #2a2a2a;border-right:none;background:linear-gradient(#929292,#7c7c7c)"></div>
<svg class="a" style="left:435px;top:1003px" width="17" height="17" viewBox="0 0 17 17"><path d="M8.500 9.500V2" stroke="#2a5fd0" stroke-width="2.200" stroke-linecap="round"/><path d="M8.500 9.500L2.500 14" stroke="#d02a1c" stroke-width="2.200" stroke-linecap="round"/><path d="M8.500 9.500l6 4.500" stroke="#3cb020" stroke-width="2.200" stroke-linecap="round"/><circle cx="8.500" cy="2" r="1.300" fill="#9cc0ff"/><circle cx="2.500" cy="14" r="1.300" fill="#ff9a8a"/><circle cx="14.500" cy="14" r="1.300" fill="#baff8a"/></svg>
<div class="a" style="left:452px;top:1001px;width:70px;height:20px;border-radius:0 4px 4px 0;border:1px solid #2a2a2a;background:linear-gradient(#666,#525252);box-shadow:0 1px 0 rgba(255,255,255,.06)"></div>
<div class="t " style="left:457px;top:1003px;color:#fff">Normal</div>
<svg class="a" style="left:509px;top:1004px" width="8" height="14" viewBox="0 0 8 14"><path d="M4 0.5l3.5 5.5h-7zM4 13.5l3.5-5.5h-7z" fill="#b8b8b8"/></svg>
<div class="a" style="left:528px;top:1001px;width:50px;height:20px;border-radius:4px;border:1px solid #2a2a2a;background:#7a7a7a;overflow:hidden"></div>
<svg class="a" style="left:528px;top:1001px" width="50" height="20" viewBox="0 0 50 19" preserveAspectRatio="none"><path d="M1 5a4 4 0 0 1 4-4h5v8.500H1z" fill="#555"/><path d="M10 1v17M20 1v17M30 1v17M40 1v17M1 9.500h48" stroke="#3a3a3a" stroke-width="1"/></svg>
<div class="a" style="left:583px;top:1001px;width:50px;height:20px;border-radius:4px;border:1px solid #2a2a2a;background:#7a7a7a;overflow:hidden"></div>
<svg class="a" style="left:583px;top:1001px" width="50" height="20" viewBox="0 0 50 19" preserveAspectRatio="none"><path d="M10 1v17M20 1v17M30 1v17M40 1v17M1 9.500h48" stroke="#3a3a3a" stroke-width="1"/><circle cx="45" cy="14.200" r="2" fill="#f0a030" stroke="#5a3000" stroke-width=".8"/></svg>
<div class="a" style="left:638px;top:1001px;width:20px;height:20px;border-radius:4px;border:1px solid #2a2a2a;background:linear-gradient(#666,#525252);box-shadow:0 1px 0 rgba(255,255,255,.06)"></div>
<svg class="a" style="left:640px;top:1004px" width="16" height="15" viewBox="0 0 16 15"><defs><linearGradient id="lk" x1="0" x2="1"><stop offset="0" stop-color="#555"/><stop offset="1" stop-color="#ddd"/></linearGradient></defs><rect x=".500" y="1.500" width="10" height="10" fill="url(#lk)" stroke="#222" stroke-width="1"/><g fill="none" stroke="#222" stroke-width="2.600"><rect x="10" y="3" width="4" height="5" rx="2"/><rect x="10" y="7" width="4" height="5" rx="2"/></g><g fill="none" stroke="#e6e6e6" stroke-width="1.200"><rect x="10" y="3" width="4" height="5" rx="2"/><rect x="10" y="7" width="4" height="5" rx="2"/></g></svg>
<div class="a" style="left:664px;top:1001px;width:19px;height:20px;border-radius:4px;border:1px solid #2a2a2a;background:linear-gradient(#909090,#7c7c7c)"></div>
<svg class="a" style="left:666px;top:1004px" width="15" height="15" viewBox="0 0 15 15"><circle cx="7.500" cy="7.500" r="5.500" fill="#8c8c8c" stroke="#a8a8a8" stroke-width="1.500"/><circle cx="7.500" cy="7.500" r="2.600" fill="#9a9a9a" stroke="#aaa" stroke-width="1"/></svg>
<div class="a" style="left:689px;top:1001px;width:19px;height:20px;border-radius:4px 0 0 4px;border:1px solid #2a2a2a;border-right:none;background:linear-gradient(#909090,#7c7c7c)"></div>
<svg class="a" style="left:691px;top:1004px" width="15" height="15" viewBox="0 0 15 15"><g transform="rotate(-45 7.500 7.500)" fill="none"><path d="M4 1.500v6.500a3.500 3.500 0 0 0 7 0V1.500" stroke="#5a5a5a" stroke-width="4"/><path d="M4 1.500v6.500a3.500 3.500 0 0 0 7 0V1.500" stroke="#a4a4a4" stroke-width="2.400"/><path d="M2.500 3.500h3M9.500 3.500h3" stroke="#5a5a5a" stroke-width="1"/></g></svg>
<div class="a" style="left:707px;top:1001px;width:36px;height:20px;border-radius:0 4px 4px 0;border:1px solid #2a2a2a;background:linear-gradient(#666,#525252);box-shadow:0 1px 0 rgba(255,255,255,.06)"></div>
<svg class="a" style="left:711px;top:1003px" width="18" height="17" viewBox="0 0 18 17"><path d="M7 4v13M13 4v13M2 8h15M2 13.500h15" stroke="#111" stroke-width="2.400"/><path d="M7 4v13M13 4v13M2 8h15M2 13.500h15" stroke="#fff" stroke-width="1.200"/><circle cx="5" cy="4.500" r="3.600" fill="#e8eefc" stroke="#9ab0e0" stroke-width="1"/><circle cx="5" cy="4.500" r="1.800" fill="#1c57c8"/></svg>
<svg class="a" style="left:732px;top:1004px" width="8" height="14" viewBox="0 0 8 14"><path d="M4 0.5l3.5 5.5h-7zM4 13.5l3.5-5.5h-7z" fill="#b8b8b8"/></svg>
<div class="a" style="left:749px;top:1001px;width:20px;height:20px;border-radius:4px 0 0 4px;border:1px solid #1e1e1e;background:#2c2c2c"></div>
<div class="a" style="left:768px;top:1001px;width:20px;height:20px;border-radius:0 4px 4px 0;border:1px solid #1e1e1e;background:#2c2c2c"></div>
<svg class="a" style="left:751px;top:1003px;opacity:1" width="16" height="16" viewBox="0 0 16 16"><defs><linearGradient id="clr" x1="0" y1="0" x2="1" y2="1"><stop offset="0" stop-color="#6a7a9a"/><stop offset=".5" stop-color="#33303c"/><stop offset="1" stop-color="#a04a3c"/></linearGradient></defs><rect x="1.600" y="2" width="2.800" height="2" rx=".500" fill="#e4e4e4" stroke="#222" stroke-width=".500"/><rect x="1" y="3.700" width="14" height="11" rx="1" fill="#c4c4c4" stroke="#1c1c1c" stroke-width="1"/><rect x="1.600" y="4.300" width="12.800" height="3" fill="#ececec"/><rect x="1.700" y="8" width="5.200" height="6" fill="#8a8a8a"/><rect x="4.800" y="5.100" width="1.400" height="1.400" fill="#e82020"/><rect x="11.800" y="4.900" width="2" height="1.800" fill="#2a3450"/><circle cx="10" cy="10.300" r="3.900" fill="#d8d8d8" stroke="#3a3a3a" stroke-width=".600"/><circle cx="10" cy="10.300" r="2.700" fill="url(#clr)"/><circle cx="12.800" cy="3.200" r="3" fill="#f5d020"/><path d="M12.800 1.200v4M10.800 3.200h4" stroke="#fff" stroke-width="1.300"/></svg>
<svg class="a" style="left:770px;top:1003px" width="16" height="16" viewBox="0 0 16 16"><rect x="1.500" y="7" width="13" height="7.500" fill="#2a2a2a" stroke="#ddd" stroke-width="1"/><path d="M1.500 6.200L14 1.800l.8 2L2.300 8.300z" fill="#eee" stroke="#222" stroke-width=".6"/><path d="M4.500 5.200l1 2M8 4l1 2M11.500 2.800l1 2" stroke="#222" stroke-width="1.300"/><path d="M2.500 3.500l1.800 3.500h-3z" fill="#5a90e8"/><path d="M4 10.500h8M4 12.500h8" stroke="#888" stroke-width="1"/></svg>
<div class="a" style="left:1040px;top:28px;width:1px;height:996px;background:#000"></div>
<div class="a" style="left:1041px;top:28px;width:239px;height:27px;background:#3d3d3d;border-left:1px solid #565656;border-top:1px solid #4e4e4e;border-bottom:1px solid #525252"></div>
<div class="hb" style="left:1050px;top:32px;width:29px;height:19px"></div>
<svg class="a" style="left:1053px;top:33px" width="15" height="16" viewBox="0 0 15 16"><path d="M3 4v10.500h3M3 8.500h3" stroke="#9ab8f0" stroke-width="1" fill="none"/><rect x=".500" y="1" width="7" height="3.400" rx=".800" fill="#f0a030" stroke="#5a3000" stroke-width=".700"/><path d="M2 2.700h4" stroke="#fff" stroke-width="1"/><rect x="6.500" y="7" width="7" height="3" rx=".800" fill="#fff" stroke="#222" stroke-width=".700"/><rect x="6.500" y="12.500" width="7" height="3" rx=".800" fill="#fff" stroke="#222" stroke-width=".700"/><path d="M8 8.500h4M8 14h4" stroke="#999" stroke-width="1"/></svg>
<svg class="a" style="left:1069px;top:34px" width="8" height="14" viewBox="0 0 8 14"><path d="M4 0.5l3.5 5.5h-7zM4 13.5l3.5-5.5h-7z" fill="#9a9a9a"/></svg>
<svg class="a" style="left:1088.0px;top:36.0px" width="12" height="12" viewBox="0 0 12 12"><circle cx="6" cy="6" r="4.2" fill="#a2a2a2" stroke="#2a2a2a" stroke-width="1"/><path d="M3.200 6h5.600" stroke="#242424" stroke-width="1.700"/></svg>
<div class="t " style="left:1112px;top:33px;">View</div>
<div class="t " style="left:1151px;top:33px;">Search</div>
<div class="hb" style="left:1198px;top:32px;width:90px;height:19px"></div>
<div class="t " style="left:1203px;top:33px;color:#fff">All Scenes</div>
<svg class="a" style="left:1266px;top:28px" width="14" height="13" viewBox="0 0 14 13"><g fill="none" stroke-width="1.500"><path d="M1.700 -1l14 14M5.700 -1l10 10M9.700 -1l6 6" stroke="#1c1c1c"/><path d="M0 -1l14 14M4 -1l10 10M8 -1l6 6" stroke="#8c8c8c"/></g></svg>
<div class="a" style="left:1041px;top:55px;width:239px;height:160px;background:#383838;border-left:1px solid #565656"></div>
<div class="a" style="left:1042px;top:75px;width:1222px;height:20px;background:#3c3c3c;;width:222px"></div>
<div class="a" style="left:1042px;top:115px;width:1222px;height:20px;background:#3c3c3c;;width:222px"></div>
<div class="a" style="left:1042px;top:155px;width:1222px;height:20px;background:#3c3c3c;;width:222px"></div>
<div class="a" style="left:1205px;top:55px;width:1px;height:142px;background:#252525"></div>
<div class="a" style="left:1225px;top:55px;width:1px;height:142px;background:#252525"></div>
<div class="a" style="left:1245px;top:55px;width:1px;height:142px;background:#252525"></div>
<svg class="a" style="left:1042px;top:55px" width="60" height="150" viewBox="0 0 60 150"><g stroke="#8a8a8a" stroke-width="1" fill="none"><path d="M0 10.500h8M15.500 19v112M20 70.500h12M20 90.500h12M20 110.500h10M20 130.500h14"/></g></svg>
<svg class="a" style="left:1047px;top:55px" width="20" height="20" viewBox="0 0 20 20"><circle cx="10" cy="10" r="8.800" fill="#9a9a9a" fill-opacity=".55" stroke="#c8c8c8" stroke-opacity=".7" stroke-width="1"/></svg>
<svg class="a" style="left:1049px;top:57px" width="16" height="16" viewBox="0 0 16 16"><defs><radialGradient id="sbo" cx=".35" cy=".3" r=".7"><stop offset="0" stop-color="#fff"/><stop offset="1" stop-color="#8a8a8a"/></radialGradient><linearGradient id="sco" x1="0" x2="1"><stop offset="0" stop-color="#9cc0f0"/><stop offset=".5" stop-color="#3a6cc0"/><stop offset="1" stop-color="#163a80"/></linearGradient></defs><rect x="8.5" y="1.5" width="5.5" height="9.5" rx="2.4" fill="url(#sco)" stroke="#12234a" stroke-width=".8"/><circle cx="3.3" cy="3" r="1.7" fill="#fffbd0" stroke="#c8c030" stroke-width="1"/><circle cx="6.2" cy="10.6" r="3.6" fill="url(#sbo)" stroke="#1a1a1a" stroke-width="1"/></svg>
<div class="t " style="left:1070px;top:57px;">Scene</div>
<svg class="a" style="left:1057px;top:80px" width="10" height="10" viewBox="0 0 10 10"><circle cx="5" cy="5" r="4.200" fill="#f4f4f4" stroke="#101010" stroke-width="1"/><path d="M5 2v6M2 5h6" stroke="#000" stroke-width="1.500"/></svg>
<svg class="a" style="left:1070px;top:77px;opacity:1" width="16" height="16" viewBox="0 0 16 16"><rect x="4.500" y="4.500" width="10" height="9.500" fill="#d8d0a8" stroke="#222" stroke-width=".800" transform="rotate(12 9 9)"/><rect x="1" y="1" width="10.500" height="10.500" fill="#fff" stroke="#111" stroke-width="1"/><rect x="6" y="3" width="3" height="5.500" rx="1.200" fill="#3a70c8" stroke="#12234a" stroke-width=".600"/><circle cx="4.800" cy="8.200" r="1.800" fill="#ddd" stroke="#222" stroke-width=".700"/><circle cx="3" cy="3" r="1" fill="#f0d040"/></svg>
<div class="t " style="left:1090px;top:77px;">RenderLayers</div>
<div class="a" style="left:1167px;top:79px;width:2px;height:12px;background:#0a0a0a"></div>
<svg class="a" style="left:1176px;top:75px" width="20" height="20" viewBox="0 0 20 20"><circle cx="10" cy="10" r="8.800" fill="#9a9a9a" fill-opacity=".6" stroke="#d0d0d0" stroke-opacity=".8" stroke-width="1"/></svg>
<svg class="a" style="left:1179px;top:78px;opacity:0.75" width="14" height="14" viewBox="0 0 16 16"><rect x="4.500" y="4.500" width="10" height="9.500" fill="#d8d0a8" stroke="#222" stroke-width=".800" transform="rotate(12 9 9)"/><rect x="1" y="1" width="10.500" height="10.500" fill="#fff" stroke="#111" stroke-width="1"/><rect x="6" y="3" width="3" height="5.500" rx="1.200" fill="#3a70c8" stroke="#12234a" stroke-width=".600"/><circle cx="4.800" cy="8.200" r="1.800" fill="#ddd" stroke="#222" stroke-width=".700"/><circle cx="3" cy="3" r="1" fill="#f0d040"/></svg>
<svg class="a" style="left:1067px;top:95px" width="20" height="20" viewBox="0 0 20 20"><circle cx="10" cy="10" r="8.800" fill="#7a7a90" fill-opacity=".6" stroke="#a8a8c0" stroke-opacity=".8" stroke-width="1.200"/></svg>
<svg class="a" style="left:1070px;top:98px" width="14" height="14" viewBox="0 0 16 16"><defs><radialGradient id="wo" cx=".35" cy=".3" r=".8"><stop offset="0" stop-color="#c0d4ec"/><stop offset=".6" stop-color="#5a84bc"/><stop offset="1" stop-color="#263c64"/></radialGradient></defs><circle cx="8" cy="8" r="6.800" fill="url(#wo)" stroke="#1a2a4a" stroke-width=".800"/><path d="M3 6c1-2 3-3.500 4.500-3.300.8.500-.2 1.500.6 2.200.9.600 1.600 0 2.200.8-.3 1.200-1.600 1.100-2.300 2-.6 1 .2 2.300-.6 3.100-1 .300-1.300-1.300-1.900-2.100C4.800 7.800 3.500 7.500 3 6zM10.500 8.500c1-.5 2.500-.3 3.300.4-.1 1.500-1 3-2.300 3.800-.6-.8-.2-1.800-.6-2.600-.2-.6-.8-1-.4-1.600z" fill="#5a7e42"/></svg>
<div class="t " style="left:1090px;top:97px;">World</div>
<svg class="a" style="left:1052px;top:120px" width="10" height="10" viewBox="0 0 10 10"><circle cx="5" cy="5" r="4.200" fill="#f4f4f4" stroke="#101010" stroke-width="1"/><path d="M5 2v6M2 5h6" stroke="#000" stroke-width="1.500"/></svg>
<svg class="a" style="left:1070px;top:117px" width="16" height="16" viewBox="0 0 16 16"><path d="M2.500 3h11L8 13.500z" fill="none" stroke="#f09030" stroke-width="1.6" stroke-linejoin="round"/><g fill="#fff" stroke="#f09030" stroke-width=".600"><rect x="1.300" y="1.800" width="2.400" height="2.400"/><rect x="12.300" y="1.800" width="2.400" height="2.400"/><rect x="6.800" y="12" width="2.400" height="2.400"/></g></svg>
<svg class="a" style="left:1138px;top:117px" width="16" height="16" viewBox="0 0 16 16"><path d="M3 3.500h10L8 13z" fill="none" stroke="#202020" stroke-width="1.300"/><g fill="#e8e8e8" stroke="#111" stroke-width=".900"><circle cx="3" cy="3.500" r="1.900"/><circle cx="13" cy="3.500" r="1.900"/><circle cx="8" cy="13" r="1.900"/></g></svg>
<div class="t " style="left:1090px;top:117px;color:#8ec3f0">Plane</div>
<div class="a" style="left:1128px;top:119px;width:2px;height:12px;background:#0a0a0a"></div>
<svg class="a" style="left:1207px;top:121px" width="14" height="10" viewBox="0 0 14 10"><path d="M.500 5C3 1 11 1 13.500 5 11 9 3 9 .500 5z" fill="#f4f4f4" stroke="#555" stroke-width=".600"/><circle cx="7" cy="4.600" r="2.700" fill="#9a9a9a"/><circle cx="7" cy="4.300" r="1.500" fill="#111"/></svg>
<svg class="a" style="left:1230px;top:118px" width="11" height="16.500" viewBox="0 0 10 15"><path d="M1 .800v10l2.500-2.200 2 4.600 1.800-.800-2-4.500H8.800z" fill="#fff" stroke="#111" stroke-width="1" stroke-linejoin="round"/></svg>
<svg class="a" style="left:1246px;top:118px;opacity:1" width="15" height="15" viewBox="0 0 16 16"><defs><linearGradient id="clo125" x1="0" y1="0" x2="1" y2="1"><stop offset="0" stop-color="#6a7a9a"/><stop offset=".5" stop-color="#33303c"/><stop offset="1" stop-color="#a04a3c"/></linearGradient></defs><rect x="1.600" y="2" width="2.800" height="2" rx=".500" fill="#e4e4e4" stroke="#222" stroke-width=".500"/><rect x="1" y="3.700" width="14" height="11" rx="1" fill="#cfcfcf" stroke="#1c1c1c" stroke-width="1"/><rect x="1.600" y="4.300" width="12.800" height="3" fill="#f4f4f4"/><rect x="1.700" y="8" width="5.200" height="6" fill="#9a9a9a"/><rect x="4.800" y="5.100" width="1.400" height="1.400" fill="#e82020"/><rect x="11.800" y="4.900" width="2" height="1.800" fill="#2a3450"/><circle cx="10" cy="10.300" r="3.900" fill="#dcdcdc" stroke="#3a3a3a" stroke-width=".600"/><circle cx="10" cy="10.300" r="2.700" fill="url(#clo125)"/></svg>
<svg class="a" style="left:1052px;top:140px" width="10" height="10" viewBox="0 0 10 10"><circle cx="5" cy="5" r="4.200" fill="#f4f4f4" stroke="#101010" stroke-width="1"/><path d="M5 2v6M2 5h6" stroke="#000" stroke-width="1.500"/></svg>
<svg class="a" style="left:1070px;top:137px" width="16" height="16" viewBox="0 0 16 16"><path d="M2.500 3h11L8 13.500z" fill="none" stroke="#f09030" stroke-width="1.6" stroke-linejoin="round"/><g fill="#fff" stroke="#f09030" stroke-width=".600"><rect x="1.300" y="1.800" width="2.400" height="2.400"/><rect x="12.300" y="1.800" width="2.400" height="2.400"/><rect x="6.800" y="12" width="2.400" height="2.400"/></g></svg>
<svg class="a" style="left:1162px;top:137px" width="16" height="16" viewBox="0 0 16 16"><path d="M3 3.500h10L8 13z" fill="none" stroke="#202020" stroke-width="1.300"/><g fill="#e8e8e8" stroke="#111" stroke-width=".900"><circle cx="3" cy="3.500" r="1.900"/><circle cx="13" cy="3.500" r="1.900"/><circle cx="8" cy="13" r="1.900"/></g></svg>
<div class="t " style="left:1090px;top:137px;color:#e0e0e0">Plane.001</div>
<div class="a" style="left:1152px;top:139px;width:2px;height:12px;background:#0a0a0a"></div>
<svg class="a" style="left:1207px;top:141px" width="14" height="10" viewBox="0 0 14 10"><path d="M.500 5C3 1 11 1 13.500 5 11 9 3 9 .500 5z" fill="#f4f4f4" stroke="#555" stroke-width=".600"/><circle cx="7" cy="4.600" r="2.700" fill="#9a9a9a"/><circle cx="7" cy="4.300" r="1.500" fill="#111"/></svg>
<svg class="a" style="left:1230px;top:138px" width="11" height="16.500" viewBox="0 0 10 15"><path d="M1 .800v10l2.500-2.200 2 4.600 1.800-.800-2-4.500H8.800z" fill="#fff" stroke="#111" stroke-width="1" stroke-linejoin="round"/></svg>
<svg class="a" style="left:1246px;top:138px;opacity:1" width="15" height="15" viewBox="0 0 16 16"><defs><linearGradient id="clo145" x1="0" y1="0" x2="1" y2="1"><stop offset="0" stop-color="#6a7a9a"/><stop offset=".5" stop-color="#33303c"/><stop offset="1" stop-color="#a04a3c"/></linearGradient></defs><rect x="1.600" y="2" width="2.800" height="2" rx=".500" fill="#e4e4e4" stroke="#222" stroke-width=".500"/><rect x="1" y="3.700" width="14" height="11" rx="1" fill="#cfcfcf" stroke="#1c1c1c" stroke-width="1"/><rect x="1.600" y="4.300" width="12.800" height="3" fill="#f4f4f4"/><rect x="1.700" y="8" width="5.200" height="6" fill="#9a9a9a"/><rect x="4.800" y="5.100" width="1.400" height="1.400" fill="#e82020"/><rect x="11.800" y="4.900" width="2" height="1.800" fill="#2a3450"/><circle cx="10" cy="10.300" r="3.900" fill="#dcdcdc" stroke="#3a3a3a" stroke-width=".600"/><circle cx="10" cy="10.300" r="2.700" fill="url(#clo145)"/></svg>
<svg class="a" style="left:1052px;top:160px" width="10" height="10" viewBox="0 0 10 10"><circle cx="5" cy="5" r="4.200" fill="#f4f4f4" stroke="#101010" stroke-width="1"/><path d="M5 2v6M2 5h6" stroke="#000" stroke-width="1.500"/></svg>
<svg class="a" style="left:1069px;top:156px;opacity:1" width="18" height="18" viewBox="0 0 18 16"><g fill="#f09030" stroke="#6a3800" stroke-width=".800"><circle cx="5" cy="4.500" r="3.600"/><circle cx="12" cy="4.500" r="3.600"/><rect x="5.500" y="8.500" width="8" height="6" rx="1"/><path d="M13.500 10.500l3.500-1.500v5l-3.500-1.500zM5.500 11H2v1.500h3.500z"/></g><circle cx="5" cy="4.500" r="1.400" fill="#fff" fill-opacity=".7"/><circle cx="12" cy="4.500" r="1.400" fill="#fff" fill-opacity=".7"/></svg>
<svg class="a" style="left:1152px;top:155px" width="20" height="20" viewBox="0 0 20 20"><circle cx="10" cy="10" r="8.800" fill="#a0a0a0" fill-opacity=".75" stroke="#d8d8d8" stroke-opacity=".8" stroke-width="1"/></svg>
<svg class="a" style="left:1155px;top:159px;opacity:0.9" width="14" height="14" viewBox="0 0 18 16"><g fill="#8a8a8a" stroke="#d0d0d0" stroke-width=".800"><circle cx="5" cy="4.500" r="3.600"/><circle cx="12" cy="4.500" r="3.600"/><rect x="5.500" y="8.500" width="8" height="6" rx="1"/><path d="M13.500 10.500l3.500-1.500v5l-3.500-1.500zM5.500 11H2v1.500h3.500z"/></g><circle cx="5" cy="4.500" r="1.400" fill="#fff" fill-opacity=".7"/><circle cx="12" cy="4.500" r="1.400" fill="#fff" fill-opacity=".7"/></svg>
<div class="t " style="left:1090px;top:157px;color:#e0e0e0">_Camera</div>
<div class="a" style="left:1144px;top:159px;width:2px;height:12px;background:#0a0a0a"></div>
<svg class="a" style="left:1207px;top:161px" width="14" height="10" viewBox="0 0 14 10"><path d="M.500 3.500C2.500 10 11.500 10 13.500 3.500 10 5.500 4 5.500 .500 3.500z" fill="#4a4a4a"/></svg>
<svg class="a" style="left:1230px;top:158px" width="11" height="16.500" viewBox="0 0 10 15"><path d="M1 .800v10l2.500-2.200 2 4.600 1.800-.800-2-4.500H8.800z" fill="#fff" stroke="#111" stroke-width="1" stroke-linejoin="round"/></svg>
<svg class="a" style="left:1246px;top:158px;opacity:1" width="15" height="15" viewBox="0 0 16 16"><defs><linearGradient id="clo165" x1="0" y1="0" x2="1" y2="1"><stop offset="0" stop-color="#6a7a9a"/><stop offset=".5" stop-color="#33303c"/><stop offset="1" stop-color="#a04a3c"/></linearGradient></defs><rect x="1.600" y="2" width="2.800" height="2" rx=".500" fill="#e4e4e4" stroke="#222" stroke-width=".500"/><rect x="1" y="3.700" width="14" height="11" rx="1" fill="#cfcfcf" stroke="#1c1c1c" stroke-width="1"/><rect x="1.600" y="4.300" width="12.800" height="3" fill="#f4f4f4"/><rect x="1.700" y="8" width="5.200" height="6" fill="#9a9a9a"/><rect x="4.800" y="5.100" width="1.400" height="1.400" fill="#e82020"/><rect x="11.800" y="4.900" width="2" height="1.800" fill="#2a3450"/><circle cx="10" cy="10.300" r="3.900" fill="#dcdcdc" stroke="#3a3a3a" stroke-width=".600"/><circle cx="10" cy="10.300" r="2.700" fill="url(#clo165)"/></svg>
<svg class="a" style="left:1052px;top:180px" width="10" height="10" viewBox="0 0 10 10"><circle cx="5" cy="5" r="4.200" fill="#f4f4f4" stroke="#101010" stroke-width="1"/><path d="M5 2v6M2 5h6" stroke="#000" stroke-width="1.500"/></svg>
<svg class="a" style="left:1070px;top:177px" width="16" height="16" viewBox="0 0 16 16"><path d="M8 1.200a4 4 0 0 0-2.300 7.300c.5.500.6 1.100.6 1.900h3.400c0-.800.1-1.400.6-1.900A4 4 0 0 0 8 1.200z" fill="#efe6da" stroke="#e88a28" stroke-width="1.100"/><path d="M6.300 10.400h3.400v3.400l-.9.900H7.200l-.9-.9z" fill="#e88a28"/><path d="M6.300 11.600h3.400M6.300 13h3.400" stroke="#fff" stroke-width=".800"/><path d="M6.600 4.800l1.400 1.400 1.400-1.400" fill="none" stroke="#e88a28" stroke-width=".800"/><circle cx="6.600" cy="3.600" r="1" fill="#fff" fill-opacity=".8"/></svg>
<svg class="a" style="left:1142px;top:177px" width="16" height="16" viewBox="0 0 16 16"><g stroke="#6a6430" stroke-width="1.200" fill="none"><path d="M1.500 4V1.500H4M12 1.500h2.500V4M14.500 12v2.500H12M4 14.500H1.500V12M3 3l3 3M13 3l-3 3M13 13l-3-3M3 13l3-3"/><circle cx="8" cy="8" r="3.200"/></g><circle cx="8" cy="8" r="1.600" fill="#bdbdbd"/></svg>
<div class="t " style="left:1090px;top:177px;color:#e0e0e0">_Lamp</div>
<div class="a" style="left:1133px;top:179px;width:2px;height:12px;background:#0a0a0a"></div>
<svg class="a" style="left:1207px;top:181px" width="14" height="10" viewBox="0 0 14 10"><path d="M.500 3.500C2.500 10 11.500 10 13.500 3.500 10 5.500 4 5.500 .500 3.500z" fill="#4a4a4a"/></svg>
<svg class="a" style="left:1230px;top:178px" width="11" height="16.500" viewBox="0 0 10 15"><path d="M1 .800v10l2.500-2.200 2 4.600 1.800-.800-2-4.500H8.800z" fill="#fff" stroke="#111" stroke-width="1" stroke-linejoin="round"/></svg>
<svg class="a" style="left:1246px;top:178px;opacity:1" width="15" height="15" viewBox="0 0 16 16"><defs><linearGradient id="clo185" x1="0" y1="0" x2="1" y2="1"><stop offset="0" stop-color="#6a7a9a"/><stop offset=".5" stop-color="#33303c"/><stop offset="1" stop-color="#a04a3c"/></linearGradient></defs><rect x="1.600" y="2" width="2.800" height="2" rx=".500" fill="#e4e4e4" stroke="#222" stroke-width=".500"/><rect x="1" y="3.700" width="14" height="11" rx="1" fill="#cfcfcf" stroke="#1c1c1c" stroke-width="1"/><rect x="1.600" y="4.300" width="12.800" height="3" fill="#f4f4f4"/><rect x="1.700" y="8" width="5.200" height="6" fill="#9a9a9a"/><rect x="4.800" y="5.100" width="1.400" height="1.400" fill="#e82020"/><rect x="11.800" y="4.900" width="2" height="1.800" fill="#2a3450"/><circle cx="10" cy="10.300" r="3.900" fill="#dcdcdc" stroke="#3a3a3a" stroke-width=".600"/><circle cx="10" cy="10.300" r="2.700" fill="url(#clo185)"/></svg>
<div class="a" style="left:1047px;top:203px;width:211px;height:11px;background:#444;border-radius:6px"></div>
<div class="a" style="left:1055px;top:203px;width:167px;height:11px;background:linear-gradient(#5e5e5e,#4a4a4a);border-radius:6px;border:1px solid #333"></div>
<svg class="a" style="left:1042px;top:202px" width="12" height="12" viewBox="0 0 12 12"><g fill="none" stroke-width="1.500"><path d="M-1 0.300l14 14M-1 4.300l10 10M-1 8.300l6 6" stroke="#1c1c1c"/><path d="M-1 2l12 12M-1 6l8 8M-1 10l4 4" stroke="#8c8c8c"/></g></svg>
<div class="a" style="left:1041px;top:215px;width:239px;height:1px;background:#000"></div>
<div class="a" style="left:1041px;top:243px;width:239px;height:781px;background:#454545;border-left:1px solid #585858"></div>
<div class="num" style="left:1049px;top:240px;width:99px;line-height:20px;">Spe: 343.300</div>
<svg class="a" style="left:1056px;top:246px" width="4" height="7" viewBox="0 0 4 7"><path d="M4 0v7L0 3.500z" fill="#5c5c5c"/></svg>
<svg class="a" style="left:1137px;top:246px" width="4" height="7" viewBox="0 0 4 7"><path d="M0 0v7l4-3.500z" fill="#5c5c5c"/></svg>
<div class="num" style="left:1156px;top:240px;width:99px;line-height:20px;">Rate: 44100</div>
<svg class="a" style="left:1163px;top:246px" width="4" height="7" viewBox="0 0 4 7"><path d="M4 0v7L0 3.500z" fill="#5c5c5c"/></svg>
<svg class="a" style="left:1244px;top:246px" width="4" height="7" viewBox="0 0 4 7"><path d="M0 0v7l4-3.500z" fill="#5c5c5c"/></svg>
<div class="num" style="left:1049px;top:262px;width:99px;line-height:20px;">Dopple: 1.000</div>
<svg class="a" style="left:1056px;top:268px" width="4" height="7" viewBox="0 0 4 7"><path d="M4 0v7L0 3.500z" fill="#5c5c5c"/></svg>
<svg class="a" style="left:1137px;top:268px" width="4" height="7" viewBox="0 0 4 7"><path d="M0 0v7l4-3.500z" fill="#5c5c5c"/></svg>
<div class="btn" style="left:1049px;top:287px;width:206px;height:20px;border-radius:4px;text-align:center;line-height:20px">Mixdown</div>
<div class="sep" style="left:1046px;top:314px;width:212px"></div>
<svg class="a" style="left:1054px;top:321.5px" width="8" height="9" viewBox="0 0 8 9"><path d="M0 0h8l-4.0 9z" fill="#141414"/></svg>
<div class="t h" style="left:1066px;top:318px;">Units</div>
<svg class="a" style="left:1237px;top:316px" width="18" height="18" viewBox="0 0 18 18"><g stroke="#6e6e6e" stroke-width="1" fill="none"><path d="M0.5 0.5l17 17M6.5 0.5l11 11M11.5 0.5l6 6"/></g></svg>
<div class="a" style="left:1049px;top:347px;width:68px;height:20px;border:1px solid #2a2a2a;border-radius:4px 0 0 4px;background:linear-gradient(#686868,#525252);color:#fff;text-align:center;line-height:20px;box-shadow:0 1px 0 rgba(255,255,255,.07)">None</div>
<div class="a" style="left:1116px;top:347px;width:69px;height:20px;border:1px solid #2a2a2a;border-radius:0;background:linear-gradient(#5a80b4,#6e98cc);color:#0a0a0a;text-align:center;line-height:20px;box-shadow:0 1px 0 rgba(255,255,255,.07)">Metric</div>
<div class="a" style="left:1184px;top:347px;width:71px;height:20px;border:1px solid #2a2a2a;border-radius:0 4px 4px 0;background:linear-gradient(#686868,#525252);color:#fff;text-align:center;line-height:20px;box-shadow:0 1px 0 rgba(255,255,255,.07)">Imperial</div>
<div class="a" style="left:1049px;top:369px;width:103px;height:20px;border:1px solid #2a2a2a;border-radius:4px 0 0 4px;background:linear-gradient(#5a80b4,#6e98cc);color:#0a0a0a;text-align:center;line-height:20px;box-shadow:0 1px 0 rgba(255,255,255,.07)">Degrees</div>
<div class="a" style="left:1151px;top:369px;width:104px;height:20px;border:1px solid #2a2a2a;border-radius:0 4px 4px 0;background:linear-gradient(#686868,#525252);color:#fff;text-align:center;line-height:20px;box-shadow:0 1px 0 rgba(255,255,255,.07)">Radians</div>
<div class="num" style="left:1049px;top:394px;width:99px;line-height:20px;">Scale: 1.000</div>
<svg class="a" style="left:1056px;top:400px" width="4" height="7" viewBox="0 0 4 7"><path d="M4 0v7L0 3.500z" fill="#5c5c5c"/></svg>
<svg class="a" style="left:1137px;top:400px" width="4" height="7" viewBox="0 0 4 7"><path d="M0 0v7l4-3.500z" fill="#5c5c5c"/></svg>
<div class="cb" style="left:1159px;top:396px"></div>
<div class="t k" style="left:1178px;top:395px;">Separate Units</div>
<div class="sep" style="left:1046px;top:421px;width:212px"></div>
<svg class="a" style="left:1054px;top:428.5px" width="8" height="9" viewBox="0 0 8 9"><path d="M0 0h8l-4.0 9z" fill="#141414"/></svg>
<div class="t h" style="left:1066px;top:425px;">Keying Sets</div>
<svg class="a" style="left:1237px;top:423px" width="18" height="18" viewBox="0 0 18 18"><g stroke="#6e6e6e" stroke-width="1" fill="none"><path d="M0.5 0.5l17 17M6.5 0.5l11 11M11.5 0.5l6 6"/></g></svg>
<div class="a" style="left:1049px;top:453px;width:178px;height:53px;background:#808080;border:1px solid #2c2c2c;border-radius:3px;box-shadow:0 1px 0 rgba(255,255,255,.08)"></div>
<div class="a" style="left:1235px;top:453px;width:20px;height:20px;background:#333;border:1px solid #262626;border-radius:4px 4px 0 0"></div>
<svg class="a" style="left:1240px;top:458px" width="11" height="11" viewBox="0 0 11 11"><path d="M5.500 .500v10M.500 5.500h10" stroke="#fff" stroke-width="2"/></svg>
<div class="a" style="left:1235px;top:472px;width:20px;height:21px;background:linear-gradient(#626262,#565656);border:1px solid #4a4a4a;border-radius:0 0 4px 4px"></div>
<svg class="a" style="left:1240px;top:478px" width="11" height="11" viewBox="0 0 11 11"><path d="M.500 5.500h10" stroke="#9a9a9a" stroke-width="2"/></svg>
<div class="sep" style="left:1046px;top:514px;width:212px"></div>
<svg class="a" style="left:1054px;top:521.5px" width="8" height="9" viewBox="0 0 8 9"><path d="M0 0h8l-4.0 9z" fill="#141414"/></svg>
<div class="cb" style="left:1066px;top:519px"></div>
<svg class="a" style="left:1067px;top:516px" width="14" height="14" viewBox="0 0 14 14"><path d="M2.500 7.500l3 3.500L12 2" fill="none" stroke="#fff" stroke-width="2"/></svg>
<div class="t h" style="left:1086px;top:518px;">Gravity</div>
<svg class="a" style="left:1237px;top:516px" width="18" height="18" viewBox="0 0 18 18"><g stroke="#6e6e6e" stroke-width="1" fill="none"><path d="M0.5 0.5l17 17M6.5 0.5l11 11M11.5 0.5l6 6"/></g></svg>
<div class="a" style="left:1049px;top:547px;width:68px;height:20px;border:1px solid #252525;border-radius:10px 0 0 10px;background:#353535;box-shadow:0 1px 0 rgba(255,255,255,.08)"></div>
<svg class="a" style="left:1056px;top:553px" width="4" height="7" viewBox="0 0 4 7"><path d="M4 0v7L0 3.500z" fill="#5c5c5c"/></svg>
<svg class="a" style="left:1106px;top:553px" width="4" height="7" viewBox="0 0 4 7"><path d="M0 0v7l4-3.500z" fill="#5c5c5c"/></svg>
<div class="a" style="left:1116px;top:547px;width:69px;height:20px;border:1px solid #252525;border-radius:0;background:#353535;box-shadow:0 1px 0 rgba(255,255,255,.08)"></div>
<svg class="a" style="left:1123px;top:553px" width="4" height="7" viewBox="0 0 4 7"><path d="M4 0v7L0 3.500z" fill="#5c5c5c"/></svg>
<svg class="a" style="left:1174px;top:553px" width="4" height="7" viewBox="0 0 4 7"><path d="M0 0v7l4-3.500z" fill="#5c5c5c"/></svg>
<div class="a" style="left:1184px;top:547px;width:71px;height:20px;border:1px solid #252525;border-radius:0 10px 10px 0;background:#353535;box-shadow:0 1px 0 rgba(255,255,255,.08)"></div>
<svg class="a" style="left:1191px;top:553px" width="4" height="7" viewBox="0 0 4 7"><path d="M4 0v7L0 3.500z" fill="#5c5c5c"/></svg>
<svg class="a" style="left:1244px;top:553px" width="4" height="7" viewBox="0 0 4 7"><path d="M0 0v7l4-3.500z" fill="#5c5c5c"/></svg>
<div class="t " style="left:1060px;top:548px;">0m/s²</div>
<div class="t " style="left:1127px;top:548px;">0m/s²</div>
<div class="t " style="left:1196px;top:548px;">-9.81m/s</div>
<div class="sep" style="left:1046px;top:574px;width:212px"></div>
<svg class="a" style="left:1054px;top:581.5px" width="8" height="9" viewBox="0 0 8 9"><path d="M0 0h8l-4.0 9z" fill="#141414"/></svg>
<div class="cb" style="left:1066px;top:579px"></div>
<div class="t h" style="left:1086px;top:578px;">Simplify</div>
<svg class="a" style="left:1237px;top:576px" width="18" height="18" viewBox="0 0 18 18"><g stroke="#6e6e6e" stroke-width="1" fill="none"><path d="M0.5 0.5l17 17M6.5 0.5l11 11M11.5 0.5l6 6"/></g></svg>
<div class="num" style="left:1049px;top:607px;width:99px;line-height:20px;background:#3f3f3f;border-color:#333;color:#8a8a8a;box-shadow:none">Subdivision: 6</div>
<svg class="a" style="left:1056px;top:613px" width="4" height="7" viewBox="0 0 4 7"><path d="M4 0v7L0 3.500z" fill="#505050"/></svg>
<svg class="a" style="left:1137px;top:613px" width="4" height="7" viewBox="0 0 4 7"><path d="M0 0v7l4-3.500z" fill="#505050"/></svg>
<div class="num" style="left:1156px;top:607px;width:99px;line-height:20px;background:#3f3f3f;border-color:#333;color:#8a8a8a;box-shadow:none">Shadow Sa: 16</div>
<svg class="a" style="left:1163px;top:613px" width="4" height="7" viewBox="0 0 4 7"><path d="M4 0v7L0 3.500z" fill="#505050"/></svg>
<svg class="a" style="left:1244px;top:613px" width="4" height="7" viewBox="0 0 4 7"><path d="M0 0v7l4-3.500z" fill="#505050"/></svg>
<div class="num" style="left:1049px;top:629px;width:99px;line-height:20px;background:#52687f;border-color:#3a3f46;color:#9a9da0;box-shadow:none">Child P: 1.000</div>
<div class="num" style="left:1156px;top:629px;width:99px;line-height:20px;background:#52687f;border-color:#3a3f46;color:#9a9da0;box-shadow:none">AO and: 1.000</div>
<div class="cb" style="left:1052px;top:654px;background:#393939;border-color:#303030;box-shadow:none"></div>
<div class="t " style="left:1071px;top:652px;color:#252525">Skip Quad to Tri</div>
<div class="sep" style="left:1046px;top:678px;width:212px"></div>
<svg class="a" style="left:1054px;top:685.5px" width="9" height="9" viewBox="0 0 9 9"><path d="M0 0v9l9 -4.5z" fill="#0c0c0c"/></svg>
<div class="t h" style="left:1066px;top:682px;">Custom Properties</div>
<svg class="a" style="left:1237px;top:680px" width="18" height="18" viewBox="0 0 18 18"><g stroke="#6e6e6e" stroke-width="1" fill="none"><path d="M0.5 0.5l17 17M6.5 0.5l11 11M11.5 0.5l6 6"/></g></svg>
<div class="sep" style="left:1046px;top:702px;width:212px"></div>
<svg class="a" style="left:1054px;top:709.5px" width="8" height="9" viewBox="0 0 8 9"><path d="M0 0h8l-4.0 9z" fill="#141414"/></svg>
<div class="t h" style="left:1066px;top:706px;">Blend Info</div>
<svg class="a" style="left:1237px;top:704px" width="18" height="18" viewBox="0 0 18 18"><g stroke="#6e6e6e" stroke-width="1" fill="none"><path d="M0.5 0.5l17 17M6.5 0.5l11 11M11.5 0.5l6 6"/></g></svg>
<svg class="a" style="left:1054px;top:737px" width="15" height="15" viewBox="0 0 14 14"><path d="M1 3.500L7 1l6 2.500v7L7 13.500 1 10.500z" fill="#f0a040" stroke="#3a2208" stroke-width="1" stroke-linejoin="round"/><path d="M7 6l6-2.500v7L7 13.500z" fill="#c87a1c"/><path d="M1 3.500L7 6v7.500L1 10.500z" fill="#f0a040"/><path d="M1 3.500L7 1l6 2.500L7 6z" fill="#fbe3bd"/><path d="M1 3.500L7 1l6 2.500v7L7 13.500 1 10.500z" fill="none" stroke="#3a2208" stroke-width="1" stroke-linejoin="round"/></svg>
<div class="t k" style="left:1070px;top:736px;">4 Objects in the scene:</div>
<svg class="a" style="left:1053px;top:761px" width="16" height="16" viewBox="0 0 16 16"><path d="M3 3.500h10L8 13z" fill="none" stroke="#161616" stroke-width="1.300"/><g fill="#fff" stroke="#111" stroke-width=".900"><circle cx="3" cy="3.500" r="1.900"/><circle cx="13" cy="3.500" r="1.900"/><circle cx="8" cy="13" r="1.900"/></g></svg>
<div class="t k" style="left:1070px;top:761px;">2 Meshes</div>
<svg class="a" style="left:1160px;top:761px" width="16" height="16" viewBox="0 0 16 16"><path d="M6 2.500c8 0 8 10-2.500 11" fill="none" stroke="#111" stroke-width="2.800"/><path d="M6 2.500c8 0 8 10-2.500 11" fill="none" stroke="#c8c8c8" stroke-width="1.400"/><g fill="#fff" stroke="#111" stroke-width=".800"><rect x="4.200" y="1" width="3" height="3"/><rect x="1.800" y="12" width="3" height="3"/></g></svg>
<div class="t k" style="left:1177px;top:761px;">0 Curves</div>
<svg class="a" style="left:1053px;top:783px;opacity:1" width="17" height="17" viewBox="0 0 18 16"><g fill="#b8b8b8" stroke="#1a1a1a" stroke-width=".800"><circle cx="5" cy="4.500" r="3.600"/><circle cx="12" cy="4.500" r="3.600"/><rect x="5.500" y="8.500" width="8" height="6" rx="1"/><path d="M13.500 10.500l3.500-1.500v5l-3.500-1.500zM5.500 11H2v1.500h3.500z"/></g><circle cx="5" cy="4.500" r="1.400" fill="#fff" fill-opacity=".7"/><circle cx="12" cy="4.500" r="1.400" fill="#fff" fill-opacity=".7"/></svg>
<div class="t k" style="left:1070px;top:783px;">1 Camera</div>
<svg class="a" style="left:1160px;top:783px" width="16" height="16" viewBox="0 0 16 16"><path d="M8 1.200a4 4 0 0 0-2.300 7.300c.5.500.6 1.100.6 1.900h3.400c0-.800.1-1.400.6-1.900A4 4 0 0 0 8 1.200z" fill="#d8d8e0" stroke="#3a3a3a" stroke-width="1.100"/><path d="M6.300 10.400h3.400v3.400l-.9.900H7.200l-.9-.9z" fill="#3a3a3a"/><path d="M6.300 11.600h3.400M6.300 13h3.400" stroke="#fff" stroke-width=".800"/><path d="M6.600 4.800l1.400 1.400 1.400-1.400" fill="none" stroke="#3a3a3a" stroke-width=".800"/><circle cx="6.600" cy="3.600" r="1" fill="#fff" fill-opacity=".8"/></svg>
<div class="t k" style="left:1177px;top:783px;">1 Lamp</div>
<svg class="a" style="left:1053px;top:805px" width="16" height="16" viewBox="0 0 16 16"><g stroke="#111" stroke-width="2.600" fill="none" stroke-linecap="round"><path d="M1.500 5h13M8 5v4M8 9l-3.500 5.500M8 9l3.500 5.500"/></g><circle cx="8" cy="2.300" r="1.900" fill="#fff" stroke="#111" stroke-width=".800"/><g stroke="#fff" stroke-width="1.200" fill="none" stroke-linecap="round"><path d="M1.500 5h13M8 5v4M8 9l-3.500 5.500M8 9l3.500 5.500"/></g></svg>
<div class="t k" style="left:1070px;top:805px;">0 Armatures</div>
<svg class="a" style="left:1160px;top:805px" width="16" height="16" viewBox="0 0 16 16"><path d="M2 2h12v12.500H2zM8 2v12.500M2 8.200h12" fill="none" stroke="#111" stroke-width="2.600"/><path d="M2 2h12v12.500H2zM8 2v12.500M2 8.200h12" fill="none" stroke="#c4c4c4" stroke-width="1.200"/><g fill="#fff" stroke="#111" stroke-width=".800"><rect x=".500" y=".500" width="3" height="3"/><rect x="12.500" y=".500" width="3" height="3"/></g></svg>
<div class="t k" style="left:1177px;top:805px;">0 Lattices</div>
<svg class="a" style="left:1053px;top:827px" width="16" height="16" viewBox="0 0 16 16"><g stroke="#111" stroke-width="2.600" fill="none" stroke-linecap="round"><path d="M8 1.500v8M8 9.500L2 14M8 9.500l6 4.500"/></g><g stroke="#fff" stroke-width="1.200" fill="none" stroke-linecap="round"><path d="M8 1.500v8M8 9.500L2 14M8 9.500l6 4.500"/></g></svg>
<div class="t k" style="left:1070px;top:827px;">0 Empties</div>
<div class="t k" style="left:1054px;top:863px;">Datablocks in the scene:</div>
<svg class="a" style="left:1053px;top:888px" width="16" height="16" viewBox="0 0 16 16"><path d="M3 3.500h10L8 13z" fill="none" stroke="#161616" stroke-width="1.300"/><g fill="#fff" stroke="#111" stroke-width=".900"><circle cx="3" cy="3.500" r="1.900"/><circle cx="13" cy="3.500" r="1.900"/><circle cx="8" cy="13" r="1.900"/></g></svg>
<div class="t k" style="left:1070px;top:888px;">2 Meshes</div>
<svg class="a" style="left:1160px;top:888px" width="16" height="16" viewBox="0 0 16 16"><path d="M6 2.500c8 0 8 10-2.500 11" fill="none" stroke="#111" stroke-width="2.800"/><path d="M6 2.500c8 0 8 10-2.500 11" fill="none" stroke="#c8c8c8" stroke-width="1.400"/><g fill="#fff" stroke="#111" stroke-width=".800"><rect x="4.200" y="1" width="3" height="3"/><rect x="1.800" y="12" width="3" height="3"/></g></svg>
<div class="t k" style="left:1177px;top:888px;">0 Curves</div>
<svg class="a" style="left:1053px;top:910px;opacity:1" width="17" height="17" viewBox="0 0 18 16"><g fill="#b8b8b8" stroke="#1a1a1a" stroke-width=".800"><circle cx="5" cy="4.500" r="3.600"/><circle cx="12" cy="4.500" r="3.600"/><rect x="5.500" y="8.500" width="8" height="6" rx="1"/><path d="M13.500 10.500l3.500-1.500v5l-3.500-1.500zM5.500 11H2v1.500h3.500z"/></g><circle cx="5" cy="4.500" r="1.400" fill="#fff" fill-opacity=".7"/><circle cx="12" cy="4.500" r="1.400" fill="#fff" fill-opacity=".7"/></svg>
<div class="t k" style="left:1070px;top:910px;">1 Camera</div>
<svg class="a" style="left:1160px;top:910px" width="16" height="16" viewBox="0 0 16 16"><path d="M8 1.200a4 4 0 0 0-2.300 7.300c.5.500.6 1.100.6 1.900h3.400c0-.800.1-1.400.6-1.900A4 4 0 0 0 8 1.200z" fill="#d8d8e0" stroke="#3a3a3a" stroke-width="1.100"/><path d="M6.300 10.400h3.400v3.400l-.9.900H7.200l-.9-.9z" fill="#3a3a3a"/><path d="M6.300 11.600h3.400M6.300 13h3.400" stroke="#fff" stroke-width=".800"/><path d="M6.600 4.800l1.400 1.400 1.400-1.400" fill="none" stroke="#3a3a3a" stroke-width=".800"/><circle cx="6.600" cy="3.600" r="1" fill="#fff" fill-opacity=".8"/></svg>
<div class="t k" style="left:1177px;top:910px;">1 Lamp</div>
<svg class="a" style="left:1053px;top:932px" width="16" height="16" viewBox="0 0 16 16"><g stroke="#111" stroke-width="2.600" fill="none" stroke-linecap="round"><path d="M1.500 5h13M8 5v4M8 9l-3.500 5.500M8 9l3.500 5.500"/></g><circle cx="8" cy="2.300" r="1.900" fill="#fff" stroke="#111" stroke-width=".800"/><g stroke="#fff" stroke-width="1.200" fill="none" stroke-linecap="round"><path d="M1.500 5h13M8 5v4M8 9l-3.500 5.500M8 9l3.500 5.500"/></g></svg>
<div class="t k" style="left:1070px;top:932px;">0 Armatures</div>
<svg class="a" style="left:1160px;top:932px" width="16" height="16" viewBox="0 0 16 16"><path d="M2 2h12v12.500H2zM8 2v12.500M2 8.200h12" fill="none" stroke="#111" stroke-width="2.600"/><path d="M2 2h12v12.500H2zM8 2v12.500M2 8.200h12" fill="none" stroke="#c4c4c4" stroke-width="1.200"/><g fill="#fff" stroke="#111" stroke-width=".800"><rect x=".500" y=".500" width="3" height="3"/><rect x="12.500" y=".500" width="3" height="3"/></g></svg>
<div class="t k" style="left:1177px;top:932px;">0 Lattices</div>
<svg class="a" style="left:1054px;top:955px" width="14" height="14" viewBox="0 0 16 16"><defs><radialGradient id="mi" cx=".35" cy=".3" r=".8"><stop offset="0" stop-color="#f0f0f0"/><stop offset=".5" stop-color="#b8a8a4"/><stop offset="1" stop-color="#5a4844"/></radialGradient></defs><circle cx="8" cy="8" r="6.800" fill="url(#mi)" stroke="#2a2a2a" stroke-width=".800"/><path d="M8 8V1.200A6.800 6.800 0 0 1 14.800 8z" fill="#7c7878" fill-opacity=".85"/><path d="M8 8v6.800A6.800 6.800 0 0 1 1.200 8z" fill="#c09890" fill-opacity=".6"/></svg>
<div class="t k" style="left:1070px;top:954px;">0 Materials</div>
<svg class="a" style="left:1161px;top:955px" width="14" height="14" viewBox="0 0 16 16"><defs><radialGradient id="wi" cx=".35" cy=".3" r=".8"><stop offset="0" stop-color="#c0d4ec"/><stop offset=".6" stop-color="#5a84bc"/><stop offset="1" stop-color="#263c64"/></radialGradient></defs><circle cx="8" cy="8" r="6.800" fill="url(#wi)" stroke="#1a2a4a" stroke-width=".800"/><path d="M3 6c1-2 3-3.500 4.500-3.300.8.500-.2 1.500.6 2.200.9.600 1.600 0 2.200.8-.3 1.200-1.600 1.100-2.300 2-.6 1 .2 2.300-.6 3.100-1 .300-1.300-1.300-1.900-2.100C4.800 7.800 3.500 7.500 3 6zM10.500 8.500c1-.5 2.500-.3 3.300.4-.1 1.500-1 3-2.300 3.800-.6-.8-.2-1.800-.6-2.600-.2-.6-.8-1-.4-1.600z" fill="#5a7e42"/></svg>
<div class="t k" style="left:1177px;top:954px;">1 World</div>
<svg class="a" style="left:1054px;top:977px" width="14" height="14" viewBox="0 0 16 16"><rect x="1" y="1" width="14" height="14" fill="#e4e4e4" stroke="#222" stroke-width=".800"/><rect x="1.5" y="1.5" width="2.600" height="2.600" fill="#96200f"/><rect x="6.7" y="1.5" width="2.600" height="2.600" fill="#96200f"/><rect x="11.9" y="1.5" width="2.600" height="2.600" fill="#96200f"/><rect x="4.1" y="4.1" width="2.600" height="2.600" fill="#96200f"/><rect x="9.3" y="4.1" width="2.600" height="2.600" fill="#96200f"/><rect x="1.5" y="6.7" width="2.600" height="2.600" fill="#96200f"/><rect x="6.7" y="6.7" width="2.600" height="2.600" fill="#96200f"/><rect x="11.9" y="6.7" width="2.600" height="2.600" fill="#96200f"/><rect x="4.1" y="9.3" width="2.600" height="2.600" fill="#96200f"/><rect x="9.3" y="9.3" width="2.600" height="2.600" fill="#96200f"/><rect x="1.5" y="11.9" width="2.600" height="2.600" fill="#96200f"/><rect x="6.7" y="11.9" width="2.600" height="2.600" fill="#96200f"/><rect x="11.9" y="11.9" width="2.600" height="2.600" fill="#96200f"/></svg>
<div class="t k" style="left:1070px;top:976px;">0 Textures</div>
<svg class="a" style="left:1160px;top:976px" width="16" height="16" viewBox="0 0 16 16"><path d="M4 1h10.500v14H1.500V3.500z" fill="#fff" stroke="#111" stroke-width="1"/><rect x="3" y="4" width="10" height="5" fill="#f0a8a0"/><rect x="3" y="9" width="10" height="4.500" fill="#6a78b0"/><path d="M3 10l3-2 3 1.500 4-2.500V10z" fill="#3a3a50"/></svg>
<div class="t k" style="left:1177px;top:976px;">0 Images</div>
<svg class="a" style="left:1053px;top:998px" width="16" height="16" viewBox="0 0 16 16"><rect x="2" y="2.500" width="12" height="13" rx="1" fill="#fff" stroke="#111" stroke-width="1"/><path d="M3.500 1v3M5.500 1v3M7.500 1v3M9.500 1v3M11.500 1v3" stroke="#3a60b0" stroke-width="1.200"/><path d="M4 7.500h8M4 9.500h8M4 11.500h8M4 13.500h8" stroke="#222" stroke-width="1"/></svg>
<div class="t k" style="left:1070px;top:998px;">0 Texts</div>
<div class="a" style="left:1265px;top:247px;width:11px;height:771px;background:linear-gradient(90deg,#3a3a3a,#444);border-radius:6px"></div>
<div class="a" style="left:1265px;top:448px;width:11px;height:570px;background:linear-gradient(90deg,#555,#6a6a6a);border-radius:6px;border:1px solid #3a3a3a"></div>
<svg class="a" style="left:1042px;top:1011px" width="14" height="13" viewBox="0 0 14 13"><g fill="none" stroke-width="1.500"><path d="M-1 0.300l14 14M-1 4.300l10 10M-1 8.300l6 6" stroke="#1c1c1c"/><path d="M-1 2l12 12M-1 6l8 8M-1 10l4 4" stroke="#8c8c8c"/></g></svg>
<div class="a" style="left:1041px;top:216px;width:239px;height:27px;background:#4a4a4a;border-left:1px solid #5a5a5a;border-top:1px solid #5c5c5c;border-bottom:1px solid #3a3a3a"></div>
<div class="a" style="left:1050px;top:220px;width:29px;height:19px;border-radius:4px;border:1px solid #2a2a2a;background:linear-gradient(#666,#525252);box-shadow:0 1px 0 rgba(255,255,255,.06)"></div>
<svg class="a" style="left:1053px;top:221.500px" width="15" height="15" viewBox="0 0 15 15"><rect x=".600" y="1" width="13.800" height="4.800" rx="2.400" fill="#585858" stroke="#0e0e0e" stroke-width="1.100"/><rect x="8.800" y="1.600" width="5" height="3.600" rx="1.500" fill="#f2f2f2"/><rect x=".600" y="8.700" width="13.800" height="5.300" rx="2.600" fill="#fff" stroke="#0e0e0e" stroke-width="1.100"/><rect x="4.300" y="10" width="6.400" height="2.700" fill="#c8c8c8"/><path d="M4 9.800v3.100l-2.300-1.550zM11 9.800v3.100l2.300-1.550z" fill="#0a0a0a"/></svg>
<svg class="a" style="left:1069px;top:221.5px" width="8" height="14" viewBox="0 0 8 14"><path d="M4 0.5l3.5 5.5h-7zM4 13.5l3.5-5.5h-7z" fill="#b0b0b0"/></svg>
<div class="a" style="left:1087px;top:219px;width:22px;height:20px;border:1px solid #2e2e2e;border-radius:4px 0 0 4px;background:linear-gradient(#666,#545454)"></div>
<div class="a" style="left:1108px;top:219px;width:22px;height:20px;border:1px solid #2e2e2e;border-radius:0;background:linear-gradient(#5a84c0,#6b98d0)"></div>
<div class="a" style="left:1129px;top:219px;width:23px;height:20px;border:1px solid #2e2e2e;border-radius:0;background:linear-gradient(#666,#545454)"></div>
<div class="a" style="left:1151px;top:219px;width:23px;height:20px;border:1px solid #2e2e2e;border-radius:0;background:linear-gradient(#666,#545454)"></div>
<div class="a" style="left:1173px;top:219px;width:23px;height:20px;border:1px solid #2e2e2e;border-radius:0;background:linear-gradient(#666,#545454)"></div>
<div class="a" style="left:1195px;top:219px;width:23px;height:20px;border:1px solid #2e2e2e;border-radius:0;background:linear-gradient(#666,#545454)"></div>
<div class="a" style="left:1217px;top:219px;width:23px;height:20px;border:1px solid #2e2e2e;border-radius:0;background:linear-gradient(#666,#545454)"></div>
<div class="a" style="left:1239px;top:219px;width:23px;height:20px;border:1px solid #2e2e2e;border-radius:0;background:linear-gradient(#666,#545454)"></div>
<div class="a" style="left:1261px;top:219px;width:23px;height:20px;border:1px solid #2e2e2e;border-radius:0;background:linear-gradient(#666,#545454)"></div>
<svg class="a" style="left:1089px;top:220px;opacity:1" width="17" height="17" viewBox="0 0 16 16"><defs><linearGradient id="clt" x1="0" y1="0" x2="1" y2="1"><stop offset="0" stop-color="#6a7a9a"/><stop offset=".5" stop-color="#33303c"/><stop offset="1" stop-color="#a04a3c"/></linearGradient></defs><rect x="1.600" y="2" width="2.800" height="2" rx=".500" fill="#e4e4e4" stroke="#222" stroke-width=".500"/><rect x="1" y="3.700" width="14" height="11" rx="1" fill="#8e8e8e" stroke="#1c1c1c" stroke-width="1"/><rect x="1.600" y="4.300" width="12.800" height="3" fill="#a8a8a8"/><rect x="1.700" y="8" width="5.200" height="6" fill="#525252"/><rect x="4.800" y="5.100" width="1.400" height="1.400" fill="#e82020"/><rect x="11.800" y="4.900" width="2" height="1.800" fill="#2a3450"/><circle cx="10" cy="10.300" r="3.900" fill="#b6b6b6" stroke="#3a3a3a" stroke-width=".600"/><circle cx="10" cy="10.300" r="2.700" fill="url(#clt)"/></svg>
<svg class="a" style="left:1110px;top:220px" width="16.8" height="16.8" viewBox="0 0 16 16"><defs><radialGradient id="sbt" cx=".35" cy=".3" r=".7"><stop offset="0" stop-color="#fff"/><stop offset="1" stop-color="#8a8a8a"/></radialGradient><linearGradient id="sct" x1="0" x2="1"><stop offset="0" stop-color="#9cc0f0"/><stop offset=".5" stop-color="#3a6cc0"/><stop offset="1" stop-color="#163a80"/></linearGradient></defs><rect x="8.5" y="1.5" width="5.5" height="9.5" rx="2.4" fill="url(#sct)" stroke="#12234a" stroke-width=".8"/><circle cx="3.3" cy="3" r="1.7" fill="#fffbd0" stroke="#c8c030" stroke-width="1"/><circle cx="6.2" cy="10.6" r="3.6" fill="url(#sbt)" stroke="#1a1a1a" stroke-width="1"/></svg>
<svg class="a" style="left:1132px;top:221px" width="15" height="15" viewBox="0 0 16 16"><defs><radialGradient id="wt" cx=".35" cy=".3" r=".8"><stop offset="0" stop-color="#c0d4ec"/><stop offset=".6" stop-color="#5a84bc"/><stop offset="1" stop-color="#263c64"/></radialGradient></defs><circle cx="8" cy="8" r="6.800" fill="url(#wt)" stroke="#1a2a4a" stroke-width=".800"/><path d="M3 6c1-2 3-3.500 4.500-3.300.8.500-.2 1.500.6 2.200.9.600 1.600 0 2.200.8-.3 1.200-1.600 1.100-2.300 2-.6 1 .2 2.300-.6 3.100-1 .300-1.300-1.300-1.900-2.100C4.800 7.800 3.500 7.500 3 6zM10.500 8.500c1-.5 2.500-.3 3.300.4-.1 1.500-1 3-2.300 3.800-.6-.8-.2-1.800-.6-2.600-.2-.6-.8-1-.4-1.600z" fill="#5a7e42"/></svg>
<svg class="a" style="left:1154px;top:221px" width="15" height="15" viewBox="0 0 14 14"><path d="M1 3.500L7 1l6 2.500v7L7 13.500 1 10.500z" fill="#c8a070" stroke="#4a3a20" stroke-width="1" stroke-linejoin="round"/><path d="M7 6l6-2.500v7L7 13.500z" fill="#a07840"/><path d="M1 3.500L7 6v7.500L1 10.500z" fill="#c8a070"/><path d="M1 3.500L7 1l6 2.500L7 6z" fill="#e8d0a8"/><path d="M1 3.500L7 1l6 2.500v7L7 13.500 1 10.500z" fill="none" stroke="#4a3a20" stroke-width="1" stroke-linejoin="round"/></svg>
<svg class="a" style="left:1175px;top:220px" width="18" height="17" viewBox="0 0 18 17"><g fill="none" stroke="#222" stroke-width="3.400"><rect x="2" y="7" width="8" height="5" rx="2.500" transform="rotate(-30 6 9.500)"/><rect x="8" y="4" width="8" height="5" rx="2.500" transform="rotate(-30 12 6.500)"/></g><g fill="none" stroke="#b8b8b8" stroke-width="1.600"><rect x="2" y="7" width="8" height="5" rx="2.500" transform="rotate(-30 6 9.500)"/><rect x="8" y="4" width="8" height="5" rx="2.500" transform="rotate(-30 12 6.500)"/></g></svg>
<svg class="a" style="left:1198px;top:220px" width="17" height="17" viewBox="0 0 17 17"><path d="M2 15.500l-.8-1.300 7.500-7.500c-.8-2 .2-4.500 2.800-5.200l-.3 2.500 2.200 1.200 1.800-1.600c.6 2.500-1.500 5-4.300 4.600L3.500 15.500z" fill="#7fa0d8" stroke="#1c2c50" stroke-width=".900" stroke-linejoin="round"/></svg>
<svg class="a" style="left:1220px;top:221px" width="16" height="16" viewBox="0 0 16 16"><path d="M3 3.500h10L8 13z" fill="none" stroke="#1a1a1a" stroke-width="2"/><path d="M3 3.500h10L8 13z" fill="none" stroke="#a0a0a0" stroke-width=".600"/><g fill="#fff" stroke="#111" stroke-width=".900"><circle cx="3" cy="3.500" r="1.900"/><circle cx="13" cy="3.500" r="1.900"/><circle cx="8" cy="13" r="1.900"/></g></svg>
<svg class="a" style="left:1242px;top:221px" width="15" height="15" viewBox="0 0 16 16"><defs><radialGradient id="mt" cx=".35" cy=".3" r=".8"><stop offset="0" stop-color="#f0f0f0"/><stop offset=".5" stop-color="#b8a8a4"/><stop offset="1" stop-color="#5a4844"/></radialGradient></defs><circle cx="8" cy="8" r="6.800" fill="url(#mt)" stroke="#2a2a2a" stroke-width=".800"/><path d="M8 8V1.200A6.800 6.800 0 0 1 14.800 8z" fill="#7c7878" fill-opacity=".85"/><path d="M8 8v6.800A6.800 6.800 0 0 1 1.200 8z" fill="#c09890" fill-opacity=".6"/></svg>
<svg class="a" style="left:1264px;top:221px" width="15" height="15" viewBox="0 0 16 16"><rect x="1" y="1" width="14" height="14" fill="#cfcfcf" stroke="#222" stroke-width=".800"/><rect x="1.5" y="1.5" width="2.600" height="2.600" fill="#8a2a1e"/><rect x="6.7" y="1.5" width="2.600" height="2.600" fill="#8a2a1e"/><rect x="11.9" y="1.5" width="2.600" height="2.600" fill="#8a2a1e"/><rect x="4.1" y="4.1" width="2.600" height="2.600" fill="#8a2a1e"/><rect x="9.3" y="4.1" width="2.600" height="2.600" fill="#8a2a1e"/><rect x="1.5" y="6.7" width="2.600" height="2.600" fill="#8a2a1e"/><rect x="6.7" y="6.7" width="2.600" height="2.600" fill="#8a2a1e"/><rect x="11.9" y="6.7" width="2.600" height="2.600" fill="#8a2a1e"/><rect x="4.1" y="9.3" width="2.600" height="2.600" fill="#8a2a1e"/><rect x="9.3" y="9.3" width="2.600" height="2.600" fill="#8a2a1e"/><rect x="1.5" y="11.9" width="2.600" height="2.600" fill="#8a2a1e"/><rect x="6.7" y="11.9" width="2.600" height="2.600" fill="#8a2a1e"/><rect x="11.9" y="11.9" width="2.600" height="2.600" fill="#8a2a1e"/></svg>
<svg class="a" style="left:1266px;top:215px" width="14" height="13" viewBox="0 0 14 13"><g fill="none" stroke-width="1.500"><path d="M1.700 -1l14 14M5.700 -1l10 10M9.700 -1l6 6" stroke="#1c1c1c"/><path d="M0 -1l14 14M4 -1l10 10M8 -1l6 6" stroke="#8c8c8c"/></g></svg>
</div>
</body></html>
